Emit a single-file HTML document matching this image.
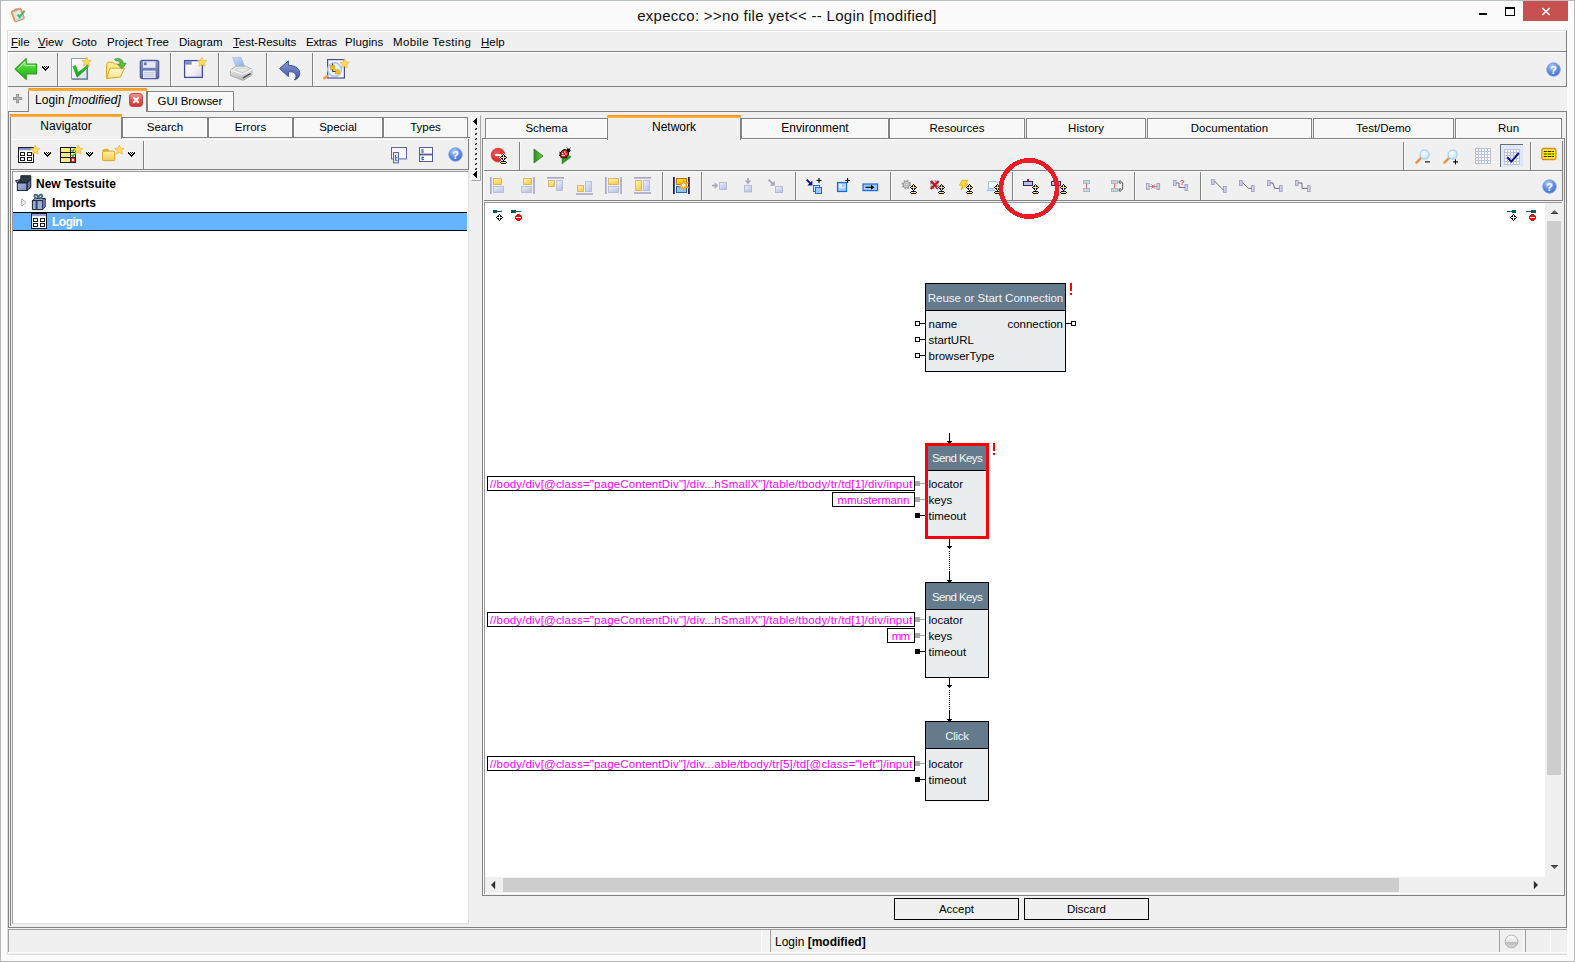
<!DOCTYPE html>
<html><head><meta charset="utf-8"><title>expecco</title>
<style>
html,body{margin:0;padding:0;}
body{width:1575px;height:962px;overflow:hidden;position:relative;background:#fbfbfb;font-family:"Liberation Sans",sans-serif;color:#000;}
body div,body svg{position:absolute;}
u{text-decoration:underline;}
</style></head><body>
<svg style="left:0;top:0" width="0" height="0"><defs><linearGradient id="gY" x1="0" y1="0" x2="0.4" y2="1"><stop offset="0" stop-color="#fff6b8"/><stop offset="1" stop-color="#f8d04a"/></linearGradient><linearGradient id="gB" x1="0" y1="0" x2="0.6" y2="1"><stop offset="0" stop-color="#eef1fa"/><stop offset="1" stop-color="#bcc6e4"/></linearGradient></defs></svg>
<div style="left:0px;top:0px;width:1575px;height:962px;background:#fbfbfb;"></div>
<div style="left:0px;top:0px;width:1575px;height:962px;box-sizing:border-box;border:1px solid #b6b6b6;border-top-color:#b9bebe;"></div>
<div style="left:0px;top:5.5px;line-height:20px;font-size:15px;white-space:nowrap;width:1574px;text-align:center;letter-spacing:0.27px;color:#111;">expecco: &gt;&gt;no file yet&lt;&lt; -- Login [modified]</div>
<svg style="left:9px;top:6px" width="19" height="18" viewBox="0 0 19 18" ><g transform="rotate(-20 8.5 9)">
<rect x="3.6" y="3.4" width="10.4" height="11.4" rx="1.2" fill="#e6a452" stroke="#c98a3c" stroke-width="0.8"/>
<rect x="5" y="4.8" width="7.6" height="8.8" fill="#dde7f7"/>
<path d="M5 13.6 H12.6 V9" fill="none" stroke="#bcd0ee" stroke-width="1.4"/>
<ellipse cx="8.8" cy="3.6" rx="2.3" ry="1.3" fill="#d98c8c"/></g>
<path d="M8.6 8.6 L10.6 11 L15.6 4.6" fill="none" stroke="#56ba4a" stroke-width="2.1"/></svg>
<div style="left:1523px;top:1px;width:45px;height:20px;background:#c75050;"></div>
<div style="left:1479px;top:13px;width:8px;height:2px;background:#000;"></div>
<div style="left:1505px;top:7px;width:10px;height:9px;box-sizing:border-box;border:1px solid #000;border-top-width:2px;"></div>
<svg style="left:1541px;top:7px" width="10" height="9" viewBox="0 0 10 9" ><path d="M1.2 1 L8.8 8 M8.8 1 L1.2 8" stroke="#fff" stroke-width="1.6" fill="none"/></svg>
<div style="left:8px;top:31px;width:1559px;height:923px;background:#f0f0f0;"></div>
<div style="left:7px;top:30px;width:1561px;height:1px;background:#dedede"></div>
<div style="left:7px;top:30px;width:1px;height:925px;background:#dedede"></div>
<div style="left:8px;top:31px;width:1559px;height:1px;background:#ffffff"></div>
<div style="left:8px;top:31px;width:1px;height:923px;background:#ffffff"></div>
<div style="left:8px;top:51px;width:1559px;height:1px;background:#828282"></div>
<div style="left:1566px;top:31px;width:1px;height:21px;background:#828282"></div>
<div style="left:11px;top:33.5px;line-height:16px;font-size:11.5px;white-space:nowrap;"><u>F</u>ile</div>
<div style="left:38px;top:33.5px;line-height:16px;font-size:11.5px;white-space:nowrap;"><u>V</u>iew</div>
<div style="left:72px;top:33.5px;line-height:16px;font-size:11.5px;white-space:nowrap;">Goto</div>
<div style="left:107px;top:33.5px;line-height:16px;font-size:11.5px;white-space:nowrap;">Project Tree</div>
<div style="left:179px;top:33.5px;line-height:16px;font-size:11.5px;white-space:nowrap;">Diagram</div>
<div style="left:233px;top:33.5px;line-height:16px;font-size:11.5px;white-space:nowrap;"><u>T</u>est-Results</div>
<div style="left:306px;top:33.5px;line-height:16px;font-size:11.5px;white-space:nowrap;letter-spacing:-0.3px;">Extras</div>
<div style="left:345px;top:33.5px;line-height:16px;font-size:11.5px;white-space:nowrap;letter-spacing:0.1px;">Plugins</div>
<div style="left:393px;top:33.5px;line-height:16px;font-size:11.5px;white-space:nowrap;letter-spacing:0.35px;">Mobile Testing</div>
<div style="left:481px;top:33.5px;line-height:16px;font-size:11.5px;white-space:nowrap;"><u>H</u>elp</div>
<div style="left:8px;top:52px;width:1559px;height:1px;background:#fdfdfd"></div>
<div style="left:8px;top:52px;width:1px;height:35px;background:#fdfdfd"></div>
<div style="left:8px;top:86px;width:1559px;height:1px;background:#828282"></div>
<div style="left:1566px;top:52px;width:1px;height:35px;background:#828282"></div>
<div style="left:57px;top:53px;width:1px;height:33px;background:#828282"></div>
<div style="left:58px;top:53px;width:1px;height:33px;background:#fafafa"></div>
<div style="left:170px;top:53px;width:1px;height:33px;background:#828282"></div>
<div style="left:171px;top:53px;width:1px;height:33px;background:#fafafa"></div>
<div style="left:218px;top:53px;width:1px;height:33px;background:#828282"></div>
<div style="left:219px;top:53px;width:1px;height:33px;background:#fafafa"></div>
<div style="left:266px;top:53px;width:1px;height:33px;background:#828282"></div>
<div style="left:267px;top:53px;width:1px;height:33px;background:#fafafa"></div>
<div style="left:312px;top:53px;width:1px;height:33px;background:#828282"></div>
<div style="left:313px;top:53px;width:1px;height:33px;background:#fafafa"></div>
<svg style="left:14px;top:57px" width="24" height="24" viewBox="0 0 24 24" ><defs><linearGradient id="ga" x1="0" y1="0" x2="0" y2="1"><stop offset="0" stop-color="#9af07a"/><stop offset="0.5" stop-color="#3fcf2b"/><stop offset="1" stop-color="#28a61b"/></linearGradient></defs>
<path d="M1.2 12 L12.2 1.6 V7.2 H22.6 V16.8 H12.2 V22.4 Z" fill="url(#ga)" stroke="#2f9e22" stroke-width="1.2" stroke-linejoin="round"/>
<path d="M3.6 12 L11 5 V8.4 H21.2" fill="none" stroke="#c8f8b4" stroke-width="1" opacity="0.8"/></svg>
<svg style="left:42px;top:65px" width="7" height="7" viewBox="0 0 7 7" shape-rendering="crispEdges"><rect x="0" y="0" width="1" height="1" fill="#fafafa"/><rect x="2" y="0" width="1" height="1" fill="#fafafa"/><rect x="4" y="0" width="1" height="1" fill="#fafafa"/><rect x="6" y="0" width="1" height="1" fill="#fafafa"/><rect x="0" y="1" width="1" height="1" fill="#000"/><rect x="2" y="1" width="1" height="1" fill="#000"/><rect x="4" y="1" width="1" height="1" fill="#000"/><rect x="6" y="1" width="1" height="1" fill="#000"/><rect x="0" y="2" width="2" height="1" fill="#000"/><rect x="2" y="2" width="1" height="1" fill="#fafafa"/><rect x="3" y="2" width="1" height="1" fill="#000"/><rect x="4" y="2" width="1" height="1" fill="#fafafa"/><rect x="5" y="2" width="2" height="1" fill="#000"/><rect x="0" y="3" width="1" height="1" fill="#fafafa"/><rect x="1" y="3" width="2" height="1" fill="#000"/><rect x="3" y="3" width="1" height="1" fill="#fafafa"/><rect x="4" y="3" width="2" height="1" fill="#000"/><rect x="6" y="3" width="1" height="1" fill="#fafafa"/><rect x="1" y="4" width="1" height="1" fill="#fafafa"/><rect x="2" y="4" width="3" height="1" fill="#000"/><rect x="5" y="4" width="1" height="1" fill="#fafafa"/><rect x="2" y="5" width="1" height="1" fill="#fafafa"/><rect x="3" y="5" width="1" height="1" fill="#000"/><rect x="4" y="5" width="1" height="1" fill="#fafafa"/><rect x="3" y="6" width="1" height="1" fill="#fafafa"/></svg>
<svg style="left:70px;top:56px" width="23" height="25" viewBox="0 0 23 25" ><defs><linearGradient id="pg" x1="0" y1="0" x2="1" y2="1"><stop offset="0" stop-color="#ffffff"/><stop offset="0.5" stop-color="#f4f0f6"/><stop offset="1" stop-color="#d9dcea"/></linearGradient>
<linearGradient id="ck" x1="0" y1="0" x2="0" y2="1"><stop offset="0" stop-color="#2fd02f"/><stop offset="1" stop-color="#0e9a12"/></linearGradient></defs>
<rect x="1.5" y="2.5" width="15.5" height="20.5" fill="url(#pg)" stroke="#8aa0b4" stroke-width="1"/>
<path d="M1.8 23.2 H17.4 V3.4" stroke="#5f7f96" stroke-width="1.3" fill="none"/>
<path d="M2.9 10.6 L5.6 9.7 L8 16.6 L17.4 9.5 L18.4 10.8 L7.2 21.2 Z" fill="url(#ck)" stroke="#11a016" stroke-width="0.7" stroke-linejoin="round"/><g transform="translate(11.8,0.9) scale(0.95)"><path d="M5 0 L6.4 3.3 L10 3.7 L7.3 6.1 L8.1 9.6 L5 7.8 L1.9 9.6 L2.7 6.1 L0 3.7 L3.6 3.3 Z" fill="#fbdc66" stroke="#e8b030" stroke-width="0.7"/></g></svg>
<svg style="left:105px;top:56px" width="23" height="25" viewBox="0 0 23 25" ><defs><linearGradient id="fo" x1="0" y1="0" x2="0" y2="1"><stop offset="0" stop-color="#fffad2"/><stop offset="1" stop-color="#fbe384"/></linearGradient></defs>
<path d="M1.5 22.5 V8 L3 6.2 H8 L9.4 8 H16.5 V12" fill="#fdea8c" stroke="#dfa62a" stroke-width="1"/>
<path d="M1.5 22.5 L5 12.2 H19.5 L15.5 21 Z" fill="url(#fo)" stroke="#d9a62a" stroke-width="1" stroke-linejoin="round"/>
<path d="M9.5 3.2 C14 1.4 18 3.4 18.4 7.6 L21.2 7.2 L17.2 12.6 L12.6 8.6 L15.4 8.2 C15 5.6 13 4.4 10.4 4.6 Z" fill="#5dbb45" stroke="#3b9a2b" stroke-width="0.8" stroke-linejoin="round"/></svg>
<svg style="left:139px;top:59px" width="21" height="21" viewBox="0 0 21 21" ><defs><linearGradient id="sv" x1="0" y1="0" x2="0" y2="1"><stop offset="0" stop-color="#8593c8"/><stop offset="1" stop-color="#5966a8"/></linearGradient></defs>
<rect x="1.3" y="1.3" width="18.4" height="18.4" rx="2" fill="url(#sv)" stroke="#4f5b9e" stroke-width="1.2"/>
<rect x="4" y="2.4" width="12.6" height="6.4" fill="#e4e8f6"/>
<rect x="5" y="3.4" width="2.6" height="2.8" fill="#6572b4"/>
<rect x="4" y="11.6" width="12.6" height="7.4" fill="#e9ecf8"/>
<path d="M5 13.6 H15.6 M5 15.6 H15.6 M5 17.4 H15.6" stroke="#b9c1de" stroke-width="0.9"/></svg>
<svg style="left:183px;top:56px" width="25" height="24" viewBox="0 0 25 24" ><defs><linearGradient id="nw" x1="0" y1="0" x2="1" y2="1"><stop offset="0" stop-color="#ffffff"/><stop offset="0.6" stop-color="#f5f0f4"/><stop offset="1" stop-color="#cfcde6"/></linearGradient></defs>
<rect x="1.6" y="4.6" width="17.8" height="16.8" fill="url(#nw)" stroke="#3f4f9e" stroke-width="1.3"/>
<rect x="2.2" y="5.2" width="6.4" height="3.4" fill="#7f8cc4"/><g transform="translate(14.2,1.2) scale(0.95)"><path d="M5 0 L6.4 3.3 L10 3.7 L7.3 6.1 L8.1 9.6 L5 7.8 L1.9 9.6 L2.7 6.1 L0 3.7 L3.6 3.3 Z" fill="#fbdc66" stroke="#e8b030" stroke-width="0.7"/></g></svg>
<svg style="left:229px;top:56px" width="25" height="26" viewBox="0 0 25 26" ><defs><linearGradient id="pp" x1="0" y1="0" x2="1" y2="1"><stop offset="0" stop-color="#c9dcf7"/><stop offset="1" stop-color="#8fb0e6"/></linearGradient>
<linearGradient id="pb" x1="0" y1="0" x2="0" y2="1"><stop offset="0" stop-color="#f4f4f4"/><stop offset="1" stop-color="#b9b9b9"/></linearGradient></defs>
<path d="M3.6 1.4 H12 L15.6 10.6 H7 Z" fill="url(#pp)" stroke="#9fb9e6" stroke-width="0.7"/>
<path d="M1.4 14 L7.2 10.2 H16.6 L23 13.4 V19 L14 24.4 L1.4 19.6 Z" fill="url(#pb)" stroke="#a2a2a2" stroke-width="0.8" stroke-linejoin="round"/>
<path d="M1.4 14 L13.6 18.2 L23 13.4" fill="none" stroke="#fdfdfd" stroke-width="1"/>
<path d="M8.4 12.2 H16 L19.6 13.8 L13.4 16.4 L6.2 13.8 Z" fill="#ececec" stroke="#bdbdbd" stroke-width="0.6"/>
<path d="M13.8 21.2 L21.6 16.8 V18.4 L13.8 22.8 Z" fill="#4a4a4a"/></svg>
<svg style="left:278px;top:58.5px" width="24" height="23" viewBox="0 0 24 23" ><defs><linearGradient id="un" x1="0" y1="0" x2="0" y2="1"><stop offset="0" stop-color="#8a9bd2"/><stop offset="1" stop-color="#3f55a6"/></linearGradient></defs>
<path d="M1.6 9.6 L10.4 1.8 V6.4 C17.6 6.2 22.6 10.2 21.6 15.4 C21 18.4 19 20.2 16.6 21 C18.4 18.6 18.6 16.2 17 14.4 C15.4 12.8 13 12.6 10.4 12.8 V17.6 Z" fill="url(#un)" stroke="#3a4d98" stroke-width="1" stroke-linejoin="round"/></svg>
<svg style="left:322px;top:56px" width="28" height="25" viewBox="0 0 28 25" ><rect x="5.6" y="3.6" width="16.8" height="18.4" fill="#fbf7fb" stroke="#3f4f9e" stroke-width="1.2"/>
<circle cx="12.6" cy="13.6" r="6.9" fill="#daf3fc" stroke="#b4bfea" stroke-width="1.5" opacity="0.96"/>
<rect x="8.4" y="9.4" width="4.4" height="4.2" fill="#f6b912" stroke="#d79a0a" stroke-width="0.5"/>
<rect x="13.4" y="13.8" width="4.2" height="4.2" fill="#f6b912" stroke="#d79a0a" stroke-width="0.5"/>
<path d="M10.6 7.6 V9.4 M10.6 13.6 V15.4 H13.4" stroke="#222" stroke-width="1" fill="none"/>
<path d="M5.4 20 L2.4 22.2" stroke="#ee9a4a" stroke-width="2.6" stroke-linecap="round"/><g transform="translate(17.8,2.8) scale(0.95)"><path d="M5 0 L6.4 3.3 L10 3.7 L7.3 6.1 L8.1 9.6 L5 7.8 L1.9 9.6 L2.7 6.1 L0 3.7 L3.6 3.3 Z" fill="#fbdc66" stroke="#e8b030" stroke-width="0.7"/></g></svg>
<svg style="left:1546px;top:61.5px" width="15" height="15" viewBox="0 0 16 16" ><defs><radialGradient id="hg154661.5" cx="0.42" cy="0.3" r="0.8"><stop offset="0" stop-color="#b9d0f7"/><stop offset="0.55" stop-color="#5c8ae4"/><stop offset="1" stop-color="#3866cc"/></radialGradient></defs>
<circle cx="8" cy="8" r="7.2" fill="url(#hg154661.5)" stroke="#7d9de0" stroke-width="0.9"/>
<text x="8" y="12.4" font-family="Liberation Sans" font-weight="bold" font-size="12" text-anchor="middle" fill="#fff">?</text></svg>
<div style="left:8px;top:111px;width:1559px;height:1px;background:#828282"></div>
<svg style="left:13px;top:94px" width="10" height="10" viewBox="0 0 10 10" ><path d="M4.6 0 V9.2 M0 4.6 H9.2" stroke="#8e8e8e" stroke-width="3" fill="none"/><path d="M4.6 0.7 V8.5 M0.7 4.6 H8.5" stroke="#b4b4b4" stroke-width="1.5" fill="none"/></svg>
<div style="left:28px;top:88px;width:119px;height:24px;background:#f0f0f0;box-sizing:border-box;border:1px solid #828282;border-bottom:none;border-radius:2px 2px 0 0;"></div>
<div style="left:28px;top:88px;width:119px;height:3px;background:linear-gradient(#ff9416,#ffb545);border-radius:2px 2px 0 0;"></div>
<div style="left:35px;top:92.0px;line-height:16px;font-size:12px;white-space:nowrap;letter-spacing:0.08px;">Login <i>[modified]</i></div>
<svg style="left:129px;top:93px" width="14" height="14" viewBox="0 0 14 14" ><defs><linearGradient id="cr" x1="0" y1="0" x2="0" y2="1"><stop offset="0" stop-color="#f29a9a"/><stop offset="0.45" stop-color="#e25a5a"/><stop offset="1" stop-color="#cf3434"/></linearGradient></defs>
<rect x="0.5" y="0.5" width="13" height="13" rx="3" fill="url(#cr)" stroke="#c04848"/>
<path d="M4.3 4.3 L9.7 9.7 M9.7 4.3 L4.3 9.7" stroke="#fff" stroke-width="2" fill="none"/></svg>
<div style="left:147px;top:91px;width:87px;height:20px;background:#f8f8f8;box-sizing:border-box;border:1px solid #828282;border-bottom:none;border-radius:0 2px 0 0;box-shadow:inset 1px 1px 0 #fff,inset -1px 0 0 #fff;"></div>
<div style="left:157.6px;top:93.0px;line-height:16px;font-size:11.5px;white-space:nowrap;letter-spacing:-0.12px;">GUI Browser</div>
<div style="left:8px;top:112px;width:1px;height:816px;background:#828282"></div>
<div style="left:1566px;top:112px;width:1px;height:816px;background:#828282"></div>
<div style="left:8px;top:927px;width:1559px;height:1px;background:#828282"></div>
<div style="left:10px;top:114px;width:1px;height:812px;background:#828282"></div>
<div style="left:122px;top:117px;width:86px;height:20px;background:#f8f8f8;box-sizing:border-box;border:1px solid #828282;border-bottom:none;box-shadow:inset 1px 1px 0 #fff,inset -1px 0 0 #fff;"></div>
<div style="left:122px;top:118.5px;line-height:16px;font-size:11.5px;white-space:nowrap;width:86px;text-align:center;">Search</div>
<div style="left:208px;top:117px;width:85px;height:20px;background:#f8f8f8;box-sizing:border-box;border:1px solid #828282;border-bottom:none;box-shadow:inset 1px 1px 0 #fff,inset -1px 0 0 #fff;"></div>
<div style="left:208px;top:118.5px;line-height:16px;font-size:11.5px;white-space:nowrap;width:85px;text-align:center;">Errors</div>
<div style="left:293px;top:117px;width:90px;height:20px;background:#f8f8f8;box-sizing:border-box;border:1px solid #828282;border-bottom:none;box-shadow:inset 1px 1px 0 #fff,inset -1px 0 0 #fff;"></div>
<div style="left:293px;top:118.5px;line-height:16px;font-size:11.5px;white-space:nowrap;width:90px;text-align:center;">Special</div>
<div style="left:383px;top:117px;width:85px;height:20px;background:#f8f8f8;box-sizing:border-box;border:1px solid #828282;border-bottom:none;box-shadow:inset 1px 1px 0 #fff,inset -1px 0 0 #fff;"></div>
<div style="left:383px;top:118.5px;line-height:16px;font-size:11.5px;white-space:nowrap;width:85px;text-align:center;">Types</div>
<div style="left:10px;top:137px;width:460px;height:1px;background:#828282"></div>
<div style="left:10px;top:114px;width:112px;height:25px;background:#f0f0f0;box-sizing:border-box;border:1px solid #828282;border-bottom:none;border-radius:2px 2px 0 0;"></div>
<div style="left:10px;top:114px;width:112px;height:3px;background:linear-gradient(#ff9416,#ffb545);border-radius:2px 2px 0 0;"></div>
<div style="left:10px;top:117.8px;line-height:16px;font-size:12px;white-space:nowrap;width:112px;text-align:center;">Navigator</div>
<div style="left:11px;top:139px;width:458px;height:1px;background:#fbfbfb"></div>
<div style="left:11px;top:169px;width:458px;height:1px;background:#828282"></div>
<div style="left:468px;top:139px;width:1px;height:31px;background:#828282"></div>
<div style="left:143px;top:141px;width:1px;height:28px;background:#828282"></div>
<div style="left:144px;top:141px;width:1px;height:28px;background:#fafafa"></div>
<svg style="left:18px;top:145px" width="24" height="19" viewBox="0 0 24 19" ><g transform="translate(0,2)"><rect x="0.5" y="0.5" width="15" height="15" fill="#fff" stroke="#1a1a1a"/>
<rect x="1" y="1" width="14" height="2.2" fill="#8392c8"/>
<rect x="2.5" y="5.5" width="4" height="3" fill="#fff" stroke="#1a1a1a"/><rect x="9.5" y="5.5" width="4" height="3" fill="#fff" stroke="#1a1a1a"/>
<rect x="2.5" y="10.5" width="4" height="3" fill="#fff" stroke="#1a1a1a"/><rect x="9.5" y="10.5" width="4" height="3" fill="#fff" stroke="#1a1a1a"/></g><g transform="translate(12.4,0) scale(0.95)"><path d="M5 0 L6.4 3.3 L10 3.7 L7.3 6.1 L8.1 9.6 L5 7.8 L1.9 9.6 L2.7 6.1 L0 3.7 L3.6 3.3 Z" fill="#fbdc66" stroke="#e8b030" stroke-width="0.7"/></g></svg>
<svg style="left:44px;top:151px" width="7" height="7" viewBox="0 0 7 7" shape-rendering="crispEdges"><rect x="0" y="0" width="1" height="1" fill="#fafafa"/><rect x="2" y="0" width="1" height="1" fill="#fafafa"/><rect x="4" y="0" width="1" height="1" fill="#fafafa"/><rect x="6" y="0" width="1" height="1" fill="#fafafa"/><rect x="0" y="1" width="1" height="1" fill="#000"/><rect x="2" y="1" width="1" height="1" fill="#000"/><rect x="4" y="1" width="1" height="1" fill="#000"/><rect x="6" y="1" width="1" height="1" fill="#000"/><rect x="0" y="2" width="2" height="1" fill="#000"/><rect x="2" y="2" width="1" height="1" fill="#fafafa"/><rect x="3" y="2" width="1" height="1" fill="#000"/><rect x="4" y="2" width="1" height="1" fill="#fafafa"/><rect x="5" y="2" width="2" height="1" fill="#000"/><rect x="0" y="3" width="1" height="1" fill="#fafafa"/><rect x="1" y="3" width="2" height="1" fill="#000"/><rect x="3" y="3" width="1" height="1" fill="#fafafa"/><rect x="4" y="3" width="2" height="1" fill="#000"/><rect x="6" y="3" width="1" height="1" fill="#fafafa"/><rect x="1" y="4" width="1" height="1" fill="#fafafa"/><rect x="2" y="4" width="3" height="1" fill="#000"/><rect x="5" y="4" width="1" height="1" fill="#fafafa"/><rect x="2" y="5" width="1" height="1" fill="#fafafa"/><rect x="3" y="5" width="1" height="1" fill="#000"/><rect x="4" y="5" width="1" height="1" fill="#fafafa"/><rect x="3" y="6" width="1" height="1" fill="#fafafa"/></svg>
<svg style="left:60px;top:145px" width="24" height="19" viewBox="0 0 24 19" ><rect x="0.5" y="2.5" width="15" height="15" fill="#f7ee8a" stroke="#1a1a1a"/>
<path d="M0.5 7.5 H15.5 M0.5 12.5 H15.5 M10.5 2.5 V17.5" stroke="#1a1a1a" fill="none"/>
<path d="M11.6 5.2 L12.8 6.4 L14.6 3.8" stroke="#1c9c2c" stroke-width="1.2" fill="none"/>
<path d="M11.6 10.2 L12.8 11.4 L14.6 8.8" stroke="#1c9c2c" stroke-width="1.2" fill="none"/>
<circle cx="13" cy="15" r="1.8" fill="#fff" stroke="#e01818" stroke-width="1.3"/><g transform="translate(13.4,0) scale(0.95)"><path d="M5 0 L6.4 3.3 L10 3.7 L7.3 6.1 L8.1 9.6 L5 7.8 L1.9 9.6 L2.7 6.1 L0 3.7 L3.6 3.3 Z" fill="#fbdc66" stroke="#e8b030" stroke-width="0.7"/></g></svg>
<svg style="left:86px;top:151px" width="7" height="7" viewBox="0 0 7 7" shape-rendering="crispEdges"><rect x="0" y="0" width="1" height="1" fill="#fafafa"/><rect x="2" y="0" width="1" height="1" fill="#fafafa"/><rect x="4" y="0" width="1" height="1" fill="#fafafa"/><rect x="6" y="0" width="1" height="1" fill="#fafafa"/><rect x="0" y="1" width="1" height="1" fill="#000"/><rect x="2" y="1" width="1" height="1" fill="#000"/><rect x="4" y="1" width="1" height="1" fill="#000"/><rect x="6" y="1" width="1" height="1" fill="#000"/><rect x="0" y="2" width="2" height="1" fill="#000"/><rect x="2" y="2" width="1" height="1" fill="#fafafa"/><rect x="3" y="2" width="1" height="1" fill="#000"/><rect x="4" y="2" width="1" height="1" fill="#fafafa"/><rect x="5" y="2" width="2" height="1" fill="#000"/><rect x="0" y="3" width="1" height="1" fill="#fafafa"/><rect x="1" y="3" width="2" height="1" fill="#000"/><rect x="3" y="3" width="1" height="1" fill="#fafafa"/><rect x="4" y="3" width="2" height="1" fill="#000"/><rect x="6" y="3" width="1" height="1" fill="#fafafa"/><rect x="1" y="4" width="1" height="1" fill="#fafafa"/><rect x="2" y="4" width="3" height="1" fill="#000"/><rect x="5" y="4" width="1" height="1" fill="#fafafa"/><rect x="2" y="5" width="1" height="1" fill="#fafafa"/><rect x="3" y="5" width="1" height="1" fill="#000"/><rect x="4" y="5" width="1" height="1" fill="#fafafa"/><rect x="3" y="6" width="1" height="1" fill="#fafafa"/></svg>
<svg style="left:101px;top:145px" width="25" height="19" viewBox="0 0 25 19" ><defs><linearGradient id="fl" x1="0" y1="0" x2="0" y2="1"><stop offset="0" stop-color="#fff3a8"/><stop offset="1" stop-color="#f3cb55"/></linearGradient></defs>
<path d="M1.5 6 L2.8 4.4 H7 L8.2 6 Z" fill="#f1c84a" stroke="#d9a62a"/>
<rect x="1.5" y="6.2" width="12.2" height="9.4" rx="0.8" fill="url(#fl)" stroke="#d9a62a"/><g transform="translate(13.6,0) scale(0.95)"><path d="M5 0 L6.4 3.3 L10 3.7 L7.3 6.1 L8.1 9.6 L5 7.8 L1.9 9.6 L2.7 6.1 L0 3.7 L3.6 3.3 Z" fill="#fbdc66" stroke="#e8b030" stroke-width="0.7"/></g></svg>
<svg style="left:128px;top:151px" width="7" height="7" viewBox="0 0 7 7" shape-rendering="crispEdges"><rect x="0" y="0" width="1" height="1" fill="#fafafa"/><rect x="2" y="0" width="1" height="1" fill="#fafafa"/><rect x="4" y="0" width="1" height="1" fill="#fafafa"/><rect x="6" y="0" width="1" height="1" fill="#fafafa"/><rect x="0" y="1" width="1" height="1" fill="#000"/><rect x="2" y="1" width="1" height="1" fill="#000"/><rect x="4" y="1" width="1" height="1" fill="#000"/><rect x="6" y="1" width="1" height="1" fill="#000"/><rect x="0" y="2" width="2" height="1" fill="#000"/><rect x="2" y="2" width="1" height="1" fill="#fafafa"/><rect x="3" y="2" width="1" height="1" fill="#000"/><rect x="4" y="2" width="1" height="1" fill="#fafafa"/><rect x="5" y="2" width="2" height="1" fill="#000"/><rect x="0" y="3" width="1" height="1" fill="#fafafa"/><rect x="1" y="3" width="2" height="1" fill="#000"/><rect x="3" y="3" width="1" height="1" fill="#fafafa"/><rect x="4" y="3" width="2" height="1" fill="#000"/><rect x="6" y="3" width="1" height="1" fill="#fafafa"/><rect x="1" y="4" width="1" height="1" fill="#fafafa"/><rect x="2" y="4" width="3" height="1" fill="#000"/><rect x="5" y="4" width="1" height="1" fill="#fafafa"/><rect x="2" y="5" width="1" height="1" fill="#fafafa"/><rect x="3" y="5" width="1" height="1" fill="#000"/><rect x="4" y="5" width="1" height="1" fill="#fafafa"/><rect x="3" y="6" width="1" height="1" fill="#fafafa"/></svg>
<svg style="left:391px;top:147px" width="17" height="18" viewBox="0 0 17 18" ><rect x="0.5" y="0.5" width="15" height="11.4" fill="#f6f6fb" stroke="#5b66a8"/>
<rect x="2.5" y="5.5" width="5" height="10.4" fill="#dfe3f4" stroke="#5b66a8"/>
<path d="M4.6 8 V13.6 M4.6 10.6 H6.4 M4.6 13.4 H6.4" stroke="#2a7ac8" stroke-width="1" fill="none"/></svg>
<svg style="left:419px;top:147px" width="15" height="16" viewBox="0 0 15 16" ><rect x="0.5" y="0.5" width="13" height="14" fill="#fbfbfe" stroke="#5b5a9a"/>
<rect x="0.5" y="6.6" width="13" height="1.8" fill="#5b5a9a"/>
<path d="M3 2 V6 M3 3 H5 M3 5 H5 M3 9.4 V13.4 M3 10.4 H5 M3 12.4 H5" stroke="#2a7ac8" stroke-width="1.1" fill="none"/></svg>
<svg style="left:447.5px;top:147px" width="15" height="15" viewBox="0 0 16 16" ><defs><radialGradient id="hg447.5147" cx="0.42" cy="0.3" r="0.8"><stop offset="0" stop-color="#b9d0f7"/><stop offset="0.55" stop-color="#5c8ae4"/><stop offset="1" stop-color="#3866cc"/></radialGradient></defs>
<circle cx="8" cy="8" r="7.2" fill="url(#hg447.5147)" stroke="#7d9de0" stroke-width="0.9"/>
<text x="8" y="12.4" font-family="Liberation Sans" font-weight="bold" font-size="12" text-anchor="middle" fill="#fff">?</text></svg>
<div style="left:12px;top:171px;width:457px;height:753px;background:#fff;box-sizing:border-box;border:1px solid #9a9a9a;border-right-color:#e0e0e0;border-bottom-color:#e0e0e0;"></div>
<svg style="left:15px;top:174px" width="17" height="18" viewBox="0 0 17 18" ><defs><linearGradient id="bx" x1="0" y1="0" x2="1" y2="1"><stop offset="0" stop-color="#aab6dc"/><stop offset="1" stop-color="#7e8cc0"/></linearGradient></defs>
<path d="M5.8 1.7 H15.8 V5.6 L11.9 9 H2.3 L5.8 5.6 Z" fill="#2c3c44" stroke="#101820" stroke-width="0.9" stroke-linejoin="round"/>
<path d="M5.8 5.6 L0.5 6.6 L2.3 9 Z" fill="#9aa8d4" stroke="#101820" stroke-width="0.9" stroke-linejoin="round"/>
<path d="M11.9 9 L15.8 5.6 V13.2 L11.9 16.6 Z" fill="#6572a6" stroke="#101820" stroke-width="0.9" stroke-linejoin="round"/>
<rect x="2.3" y="9" width="9.6" height="7.6" fill="url(#bx)" stroke="#101820" stroke-width="0.9"/></svg>
<svg style="left:21px;top:198px" width="6" height="9" viewBox="0 0 6 9" ><path d="M0.7 0.9 L5 4.5 L0.7 8.1 Z" fill="#fff" stroke="#a6a6a6" stroke-width="1"/></svg>
<svg style="left:31px;top:193px" width="16" height="18" viewBox="0 0 16 18" ><path d="M1.4 7.6 L4 5.4 H14.2 V13.8 L11.6 16.6 H1.4 Z" fill="#9fb0d6" stroke="#15202a" stroke-width="1" stroke-linejoin="round"/>
<path d="M11.6 7.6 V16.6 M1.4 7.6 H11.6 L14.2 5.4" stroke="#15202a" stroke-width="1" fill="none"/>
<path d="M11.8 7.8 L14 5.8 V13.6 L11.8 16.2 Z" fill="#6a7aa8"/>
<path d="M5.6 7.6 V16.6" stroke="#2f4a60" stroke-width="2"/>
<path d="M6 5.6 C3 4.8 2.6 1.6 5 1.6 C6.6 1.6 7 3.6 7.2 5.4 C7.6 3.4 8.4 1.4 10.2 1.6 C12.4 2 11.4 5 8.4 5.6" fill="none" stroke="#3f627c" stroke-width="1.7"/></svg>
<div style="left:36px;top:175.5px;line-height:16px;font-size:12px;white-space:nowrap;font-weight:bold;">New Testsuite</div>
<div style="left:52px;top:194.5px;line-height:16px;font-size:12px;white-space:nowrap;font-weight:bold;">Imports</div>
<div style="left:13px;top:212px;width:454px;height:19px;background:#66b3ff;box-sizing:border-box;border-top:1px solid #000;border-bottom:1px solid #000;"></div>
<div style="left:52px;top:213.5px;line-height:16px;font-size:12px;white-space:nowrap;letter-spacing:-0.5px;font-weight:bold;color:#fff;">Login</div>
<svg style="left:31px;top:213px" width="17" height="17" viewBox="0 0 17 17" ><g transform="translate(0,0)"><rect x="0.5" y="0.5" width="15" height="15" fill="#fff" stroke="#1a1a1a"/>
<rect x="1" y="1" width="14" height="2.2" fill="#8fa0dc"/>
<rect x="2.5" y="5.5" width="4" height="3" fill="#fff" stroke="#1a1a1a"/><rect x="9.5" y="5.5" width="4" height="3" fill="#fff" stroke="#1a1a1a"/>
<rect x="2.5" y="10.5" width="4" height="3" fill="#fff" stroke="#1a1a1a"/><rect x="9.5" y="10.5" width="4" height="3" fill="#fff" stroke="#1a1a1a"/></g></svg>
<div style="left:471px;top:115px;width:10px;height:66px;background:#f0f0f0;box-sizing:border-box;border:1px solid #a6a6a6;border-top-color:#fcfcfc;border-left-color:#fcfcfc;"></div>
<svg style="left:473px;top:118px" width="4" height="7" viewBox="0 0 4 7" shape-rendering="crispEdges"><rect x="3" y="0" width="1" height="1" fill="#000"/><rect x="2" y="1" width="2" height="1" fill="#000"/><rect x="1" y="2" width="3" height="1" fill="#000"/><rect x="0" y="3" width="4" height="1" fill="#000"/><rect x="1" y="4" width="3" height="1" fill="#000"/><rect x="2" y="5" width="2" height="1" fill="#000"/><rect x="3" y="6" width="1" height="1" fill="#000"/></svg>
<svg style="left:473px;top:171px" width="4" height="7" viewBox="0 0 4 7" shape-rendering="crispEdges"><rect x="3" y="0" width="1" height="1" fill="#000"/><rect x="2" y="1" width="2" height="1" fill="#000"/><rect x="1" y="2" width="3" height="1" fill="#000"/><rect x="0" y="3" width="4" height="1" fill="#000"/><rect x="1" y="4" width="3" height="1" fill="#000"/><rect x="2" y="5" width="2" height="1" fill="#000"/><rect x="3" y="6" width="1" height="1" fill="#000"/></svg>
<svg style="left:475px;top:128px" width="2" height="2" viewBox="0 0 2 2" shape-rendering="crispEdges"><rect x="0" y="0" width="1" height="1" fill="#8a8a8a"/><rect x="1" y="0" width="1" height="1" fill="#111"/><rect x="0" y="1" width="1" height="1" fill="#111"/><rect x="1" y="1" width="1" height="1" fill="#8a8a8a"/></svg>
<svg style="left:475px;top:133px" width="2" height="2" viewBox="0 0 2 2" shape-rendering="crispEdges"><rect x="0" y="0" width="1" height="1" fill="#8a8a8a"/><rect x="1" y="0" width="1" height="1" fill="#111"/><rect x="0" y="1" width="1" height="1" fill="#111"/><rect x="1" y="1" width="1" height="1" fill="#8a8a8a"/></svg>
<svg style="left:475px;top:138px" width="2" height="2" viewBox="0 0 2 2" shape-rendering="crispEdges"><rect x="0" y="0" width="1" height="1" fill="#8a8a8a"/><rect x="1" y="0" width="1" height="1" fill="#111"/><rect x="0" y="1" width="1" height="1" fill="#111"/><rect x="1" y="1" width="1" height="1" fill="#8a8a8a"/></svg>
<svg style="left:475px;top:143px" width="2" height="2" viewBox="0 0 2 2" shape-rendering="crispEdges"><rect x="0" y="0" width="1" height="1" fill="#8a8a8a"/><rect x="1" y="0" width="1" height="1" fill="#111"/><rect x="0" y="1" width="1" height="1" fill="#111"/><rect x="1" y="1" width="1" height="1" fill="#8a8a8a"/></svg>
<svg style="left:475px;top:148px" width="2" height="2" viewBox="0 0 2 2" shape-rendering="crispEdges"><rect x="0" y="0" width="1" height="1" fill="#8a8a8a"/><rect x="1" y="0" width="1" height="1" fill="#111"/><rect x="0" y="1" width="1" height="1" fill="#111"/><rect x="1" y="1" width="1" height="1" fill="#8a8a8a"/></svg>
<svg style="left:475px;top:153px" width="2" height="2" viewBox="0 0 2 2" shape-rendering="crispEdges"><rect x="0" y="0" width="1" height="1" fill="#8a8a8a"/><rect x="1" y="0" width="1" height="1" fill="#111"/><rect x="0" y="1" width="1" height="1" fill="#111"/><rect x="1" y="1" width="1" height="1" fill="#8a8a8a"/></svg>
<svg style="left:475px;top:158px" width="2" height="2" viewBox="0 0 2 2" shape-rendering="crispEdges"><rect x="0" y="0" width="1" height="1" fill="#8a8a8a"/><rect x="1" y="0" width="1" height="1" fill="#111"/><rect x="0" y="1" width="1" height="1" fill="#111"/><rect x="1" y="1" width="1" height="1" fill="#8a8a8a"/></svg>
<svg style="left:475px;top:163px" width="2" height="2" viewBox="0 0 2 2" shape-rendering="crispEdges"><rect x="0" y="0" width="1" height="1" fill="#8a8a8a"/><rect x="1" y="0" width="1" height="1" fill="#111"/><rect x="0" y="1" width="1" height="1" fill="#111"/><rect x="1" y="1" width="1" height="1" fill="#8a8a8a"/></svg>
<svg style="left:475px;top:168px" width="2" height="2" viewBox="0 0 2 2" shape-rendering="crispEdges"><rect x="0" y="0" width="1" height="1" fill="#8a8a8a"/><rect x="1" y="0" width="1" height="1" fill="#111"/><rect x="0" y="1" width="1" height="1" fill="#111"/><rect x="1" y="1" width="1" height="1" fill="#8a8a8a"/></svg>
<div style="left:485px;top:118px;width:123px;height:21px;background:#f8f8f8;box-sizing:border-box;border:1px solid #828282;border-bottom:none;box-shadow:inset 1px 1px 0 #fff,inset -1px 0 0 #fff;"></div>
<div style="left:485px;top:119.5px;line-height:16px;font-size:11.5px;white-space:nowrap;width:123px;text-align:center;">Schema</div>
<div style="left:741px;top:118px;width:148px;height:21px;background:#f8f8f8;box-sizing:border-box;border:1px solid #828282;border-bottom:none;box-shadow:inset 1px 1px 0 #fff,inset -1px 0 0 #fff;"></div>
<div style="left:741px;top:119.5px;line-height:16px;font-size:12px;white-space:nowrap;width:148px;text-align:center;">Environment</div>
<div style="left:889px;top:118px;width:136px;height:21px;background:#f8f8f8;box-sizing:border-box;border:1px solid #828282;border-bottom:none;box-shadow:inset 1px 1px 0 #fff,inset -1px 0 0 #fff;"></div>
<div style="left:889px;top:119.5px;line-height:16px;font-size:11.5px;white-space:nowrap;width:136px;text-align:center;">Resources</div>
<div style="left:1026px;top:118px;width:120px;height:21px;background:#f8f8f8;box-sizing:border-box;border:1px solid #828282;border-bottom:none;box-shadow:inset 1px 1px 0 #fff,inset -1px 0 0 #fff;"></div>
<div style="left:1026px;top:119.5px;line-height:16px;font-size:11.5px;white-space:nowrap;width:120px;text-align:center;">History</div>
<div style="left:1147px;top:118px;width:165px;height:21px;background:#f8f8f8;box-sizing:border-box;border:1px solid #828282;border-bottom:none;box-shadow:inset 1px 1px 0 #fff,inset -1px 0 0 #fff;"></div>
<div style="left:1147px;top:119.5px;line-height:16px;font-size:11.5px;white-space:nowrap;width:165px;text-align:center;">Documentation</div>
<div style="left:1313px;top:118px;width:141px;height:21px;background:#f8f8f8;box-sizing:border-box;border:1px solid #828282;border-bottom:none;box-shadow:inset 1px 1px 0 #fff,inset -1px 0 0 #fff;"></div>
<div style="left:1313px;top:119.5px;line-height:16px;font-size:11.5px;white-space:nowrap;width:141px;text-align:center;">Test/Demo</div>
<div style="left:1455px;top:118px;width:107px;height:21px;background:#f8f8f8;box-sizing:border-box;border:1px solid #828282;border-bottom:none;box-shadow:inset 1px 1px 0 #fff,inset -1px 0 0 #fff;"></div>
<div style="left:1455px;top:119.5px;line-height:16px;font-size:11.5px;white-space:nowrap;width:107px;text-align:center;">Run</div>
<div style="left:482px;top:138px;width:1083px;height:1px;background:#828282"></div>
<div style="left:482px;top:138px;width:1px;height:758px;background:#828282"></div>
<div style="left:1564px;top:138px;width:1px;height:758px;background:#828282"></div>
<div style="left:482px;top:895px;width:1083px;height:1px;background:#828282"></div>
<div style="left:483px;top:139px;width:1081px;height:1px;background:#fcfcfc"></div>
<div style="left:483px;top:139px;width:1px;height:756px;background:#fcfcfc"></div>
<div style="left:607px;top:115px;width:134px;height:25px;background:#f0f0f0;box-sizing:border-box;border:1px solid #828282;border-bottom:none;border-radius:2px 2px 0 0;"></div>
<div style="left:607px;top:115px;width:134px;height:3px;background:linear-gradient(#ff9416,#ffb545);border-radius:2px 2px 0 0;"></div>
<div style="left:607px;top:119.0px;line-height:16px;font-size:12px;white-space:nowrap;width:134px;text-align:center;">Network</div>
<div style="left:484px;top:170px;width:1079px;height:1px;background:#828282"></div>
<div style="left:484px;top:171px;width:1079px;height:1px;background:#fbfbfb"></div>
<div style="left:484px;top:200px;width:1079px;height:1px;background:#828282"></div>
<div style="left:1562px;top:141px;width:1px;height:60px;background:#828282"></div>
<div style="left:519px;top:142px;width:1px;height:28px;background:#828282"></div>
<div style="left:520px;top:142px;width:1px;height:28px;background:#fafafa"></div>
<div style="left:1403px;top:142px;width:1px;height:28px;background:#828282"></div>
<div style="left:1404px;top:142px;width:1px;height:28px;background:#fafafa"></div>
<div style="left:1530px;top:142px;width:1px;height:28px;background:#828282"></div>
<div style="left:1531px;top:142px;width:1px;height:28px;background:#fafafa"></div>
<div style="left:662px;top:172px;width:1px;height:28px;background:#828282"></div>
<div style="left:663px;top:172px;width:1px;height:28px;background:#fafafa"></div>
<div style="left:701px;top:172px;width:1px;height:28px;background:#828282"></div>
<div style="left:702px;top:172px;width:1px;height:28px;background:#fafafa"></div>
<div style="left:795px;top:172px;width:1px;height:28px;background:#828282"></div>
<div style="left:796px;top:172px;width:1px;height:28px;background:#fafafa"></div>
<div style="left:890px;top:172px;width:1px;height:28px;background:#828282"></div>
<div style="left:891px;top:172px;width:1px;height:28px;background:#fafafa"></div>
<div style="left:1012px;top:172px;width:1px;height:28px;background:#828282"></div>
<div style="left:1013px;top:172px;width:1px;height:28px;background:#fafafa"></div>
<div style="left:1134px;top:172px;width:1px;height:28px;background:#828282"></div>
<div style="left:1135px;top:172px;width:1px;height:28px;background:#fafafa"></div>
<div style="left:1200px;top:172px;width:1px;height:28px;background:#828282"></div>
<div style="left:1201px;top:172px;width:1px;height:28px;background:#fafafa"></div>
<svg style="left:490px;top:147px" width="19" height="19" viewBox="0 0 19 19" ><defs><radialGradient id="rm" cx="0.4" cy="0.35" r="0.8"><stop offset="0" stop-color="#ee5a5a"/><stop offset="0.7" stop-color="#d92a2a"/><stop offset="1" stop-color="#c01a1e"/></radialGradient></defs>
<circle cx="8.1" cy="8.1" r="7" fill="url(#rm)" stroke="#d23030" stroke-width="0.5"/>
<rect x="4.8" y="7" width="6.3" height="2.1" fill="#fff"/><g transform="translate(10,7)"><g shape-rendering="crispEdges" transform="translate(-1,-1)"><rect x="4" y="0" width="1" height="1" fill="#f8f8f8"/><rect x="3" y="1" width="1" height="1" fill="#f8f8f8"/><rect x="4" y="1" width="1" height="1" fill="#141420"/><rect x="5" y="1" width="1" height="1" fill="#f8f8f8"/><rect x="2" y="2" width="1" height="1" fill="#f8f8f8"/><rect x="3" y="2" width="1" height="1" fill="#141420"/><rect x="4" y="2" width="1" height="1" fill="#ffe262"/><rect x="5" y="2" width="1" height="1" fill="#141420"/><rect x="6" y="2" width="1" height="1" fill="#f8f8f8"/><rect x="1" y="3" width="1" height="1" fill="#f8f8f8"/><rect x="2" y="3" width="2" height="1" fill="#141420"/><rect x="4" y="3" width="1" height="1" fill="#ffe262"/><rect x="5" y="3" width="2" height="1" fill="#141420"/><rect x="7" y="3" width="1" height="1" fill="#f8f8f8"/><rect x="0" y="4" width="1" height="1" fill="#f8f8f8"/><rect x="1" y="4" width="1" height="1" fill="#141420"/><rect x="2" y="4" width="5" height="1" fill="#ffe262"/><rect x="7" y="4" width="1" height="1" fill="#141420"/><rect x="8" y="4" width="1" height="1" fill="#f8f8f8"/><rect x="1" y="5" width="1" height="1" fill="#f8f8f8"/><rect x="2" y="5" width="2" height="1" fill="#141420"/><rect x="4" y="5" width="1" height="1" fill="#ffe262"/><rect x="5" y="5" width="2" height="1" fill="#141420"/><rect x="7" y="5" width="1" height="1" fill="#f8f8f8"/><rect x="2" y="6" width="1" height="1" fill="#f8f8f8"/><rect x="3" y="6" width="1" height="1" fill="#141420"/><rect x="4" y="6" width="1" height="1" fill="#ffe262"/><rect x="5" y="6" width="1" height="1" fill="#141420"/><rect x="6" y="6" width="1" height="1" fill="#f8f8f8"/><rect x="2" y="7" width="2" height="1" fill="#f8f8f8"/><rect x="4" y="7" width="1" height="1" fill="#141420"/><rect x="5" y="7" width="2" height="1" fill="#f8f8f8"/><rect x="1" y="8" width="1" height="1" fill="#f8f8f8"/><rect x="2" y="8" width="5" height="1" fill="#141420"/><rect x="7" y="8" width="1" height="1" fill="#f8f8f8"/><rect x="0" y="9" width="1" height="1" fill="#f8f8f8"/><rect x="1" y="9" width="1" height="1" fill="#141420"/><rect x="2" y="9" width="5" height="1" fill="#ffe262"/><rect x="7" y="9" width="1" height="1" fill="#141420"/><rect x="8" y="9" width="1" height="1" fill="#f8f8f8"/><rect x="1" y="10" width="1" height="1" fill="#f8f8f8"/><rect x="2" y="10" width="5" height="1" fill="#141420"/><rect x="7" y="10" width="1" height="1" fill="#f8f8f8"/><rect x="2" y="11" width="5" height="1" fill="#f8f8f8"/></g></g></svg>
<svg style="left:532px;top:148px" width="13" height="16" viewBox="0 0 13 16" ><defs><linearGradient id="pl" x1="0" y1="0" x2="1" y2="0"><stop offset="0" stop-color="#2c8a1c"/><stop offset="0.5" stop-color="#48b52e"/><stop offset="1" stop-color="#6fd048"/></linearGradient></defs>
<path d="M2 1 L11 8 L2 15 Z" fill="url(#pl)" stroke="#2f8a20" stroke-width="0.9" stroke-linejoin="round"/></svg>
<svg style="left:557px;top:147px" width="17" height="19" viewBox="0 0 17 19" ><path d="M5 3 L14 10 L5 17 Z" fill="#2f9a22" stroke="#2a8a1e" stroke-width="0.6"/>
<path d="M2.4 5.2 L4.2 6 M2 8.4 L3.8 8.2 M3.6 11 L4.8 9.8 M7 2 L7.4 3.4 M10 11.4 L9.2 10" stroke="#000" stroke-width="1"/>
<ellipse cx="7.3" cy="6.8" rx="4.5" ry="3.7" transform="rotate(-28 7.3 6.8)" fill="#e31c1c" stroke="#000" stroke-width="0.8"/>
<circle cx="11.6" cy="3.4" r="1.9" fill="#000"/><path d="M12.4 1.8 L13.6 0.8 M10.6 1.8 L10 0.6" stroke="#000" stroke-width="0.8"/>
<circle cx="5.6" cy="6.4" r="0.75" fill="#fff"/><circle cx="7.8" cy="5" r="0.75" fill="#fff"/><circle cx="7" cy="8.4" r="0.75" fill="#fff"/><circle cx="9" cy="7" r="0.7" fill="#fff"/><circle cx="5.2" cy="8.6" r="0.6" fill="#fff"/></svg>
<svg style="left:1415px;top:148.5px" width="17" height="17" viewBox="0 0 17 17" ><defs><radialGradient id="mg1415" cx="0.4" cy="0.35" r="0.7"><stop offset="0" stop-color="#ffffff"/><stop offset="1" stop-color="#b4e4f8"/></radialGradient></defs>
<path d="M6.4 8.6 L1.4 13.6" stroke="#e09448" stroke-width="2.4" stroke-linecap="round"/>
<circle cx="9.6" cy="5.6" r="4.6" fill="url(#mg1415)" stroke="#b4cfe8" stroke-width="1.3"/><path d="M10 12.9 H15" stroke="#000" stroke-width="1.1"/></svg>
<svg style="left:1443px;top:148.5px" width="17" height="17" viewBox="0 0 17 17" ><defs><radialGradient id="mg1443" cx="0.4" cy="0.35" r="0.7"><stop offset="0" stop-color="#ffffff"/><stop offset="1" stop-color="#b4e4f8"/></radialGradient></defs>
<path d="M6.4 8.6 L1.4 13.6" stroke="#e09448" stroke-width="2.4" stroke-linecap="round"/>
<circle cx="9.6" cy="5.6" r="4.6" fill="url(#mg1443)" stroke="#b4cfe8" stroke-width="1.3"/><path d="M10 12.9 H15" stroke="#000" stroke-width="1.1"/><path d="M12.5 10.4 V15.4" stroke="#000" stroke-width="1.1"/></svg>
<svg style="left:1475px;top:148px" width="17" height="17" viewBox="0 0 17 17" ><rect x="0" y="0" width="16" height="16" fill="#fff"/><path d="M0.5 0 V16 M0 0.5 H16" stroke="#bcc1e0" stroke-width="1"/><path d="M3.5 0 V16 M0 3.5 H16" stroke="#bcc1e0" stroke-width="1"/><path d="M6.5 0 V16 M0 6.5 H16" stroke="#bcc1e0" stroke-width="1"/><path d="M9.5 0 V16 M0 9.5 H16" stroke="#bcc1e0" stroke-width="1"/><path d="M12.5 0 V16 M0 12.5 H16" stroke="#bcc1e0" stroke-width="1"/><path d="M15.5 0 V16 M0 15.5 H16" stroke="#bcc1e0" stroke-width="1"/></svg>
<div style="left:1500px;top:144px;width:23px;height:23px;background:#dce7f8;box-sizing:border-box;border-top:1px solid #6f6f6f;border-left:1px solid #6f6f6f;"></div>
<svg style="left:1504px;top:149px" width="17" height="17" viewBox="0 0 17 17" ><rect x="0" y="0" width="16" height="16" fill="#fff"/><path d="M0.5 0 V16 M0 0.5 H16" stroke="#bcc1e0" stroke-width="1"/><path d="M3.5 0 V16 M0 3.5 H16" stroke="#bcc1e0" stroke-width="1"/><path d="M6.5 0 V16 M0 6.5 H16" stroke="#bcc1e0" stroke-width="1"/><path d="M9.5 0 V16 M0 9.5 H16" stroke="#bcc1e0" stroke-width="1"/><path d="M12.5 0 V16 M0 12.5 H16" stroke="#bcc1e0" stroke-width="1"/><path d="M15.5 0 V16 M0 15.5 H16" stroke="#bcc1e0" stroke-width="1"/><path d="M3.2 8.2 L7.4 12.6 L14.8 4" fill="none" stroke="#10168a" stroke-width="2"/></svg>
<svg style="left:1541px;top:147px" width="16" height="14" viewBox="0 0 16 14" ><rect x="0.9" y="1.5" width="14" height="11" rx="1.4" fill="#fff400" stroke="#d4883c" stroke-width="1.3"/>
<path d="M2.8 4.5 H13 M2.8 7 H13 M2.8 9.5 H13" stroke="#2a2a00" stroke-width="1" stroke-dasharray="3 0.7 4 0.7 2 0.7"/></svg>
<svg style="left:489px;top:176px" width="17" height="19" viewBox="0 0 17 19" ><rect x="1" y="1" width="1.6" height="17" fill="#a9a6c4"/><rect x="4.5" y="2.5" width="8" height="6" fill="url(#gY)" stroke="#dcae6a" stroke-width="0.9"/><rect x="4.5" y="10.5" width="10" height="6" fill="url(#gB)" stroke="#b4bbd8" stroke-width="0.9"/></svg>
<svg style="left:520px;top:176px" width="17" height="19" viewBox="0 0 17 19" ><rect x="13.2" y="1" width="1.6" height="17" fill="#a9a6c4"/><rect x="3.5" y="2.5" width="8" height="6" fill="url(#gY)" stroke="#dcae6a" stroke-width="0.9"/><rect x="1.5" y="10.5" width="10" height="6" fill="url(#gB)" stroke="#b4bbd8" stroke-width="0.9"/></svg>
<svg style="left:546px;top:176px" width="19" height="17" viewBox="0 0 19 17" ><rect x="1" y="1" width="17" height="1.6" fill="#a9a6c4"/><rect x="2.5" y="4.5" width="6" height="6" fill="url(#gY)" stroke="#dcae6a" stroke-width="0.9"/><rect x="10.5" y="4.5" width="6" height="10" fill="url(#gB)" stroke="#b4bbd8" stroke-width="0.9"/></svg>
<svg style="left:575px;top:178px" width="19" height="18" viewBox="0 0 19 18" ><rect x="1" y="15.2" width="17" height="1.6" fill="#a9a6c4"/><rect x="2.5" y="7.5" width="6" height="6" fill="url(#gY)" stroke="#dcae6a" stroke-width="0.9"/><rect x="10.5" y="3.5" width="6" height="10" fill="url(#gB)" stroke="#b4bbd8" stroke-width="0.9"/></svg>
<svg style="left:604px;top:176px" width="19" height="19" viewBox="0 0 19 19" ><rect x="1" y="1" width="1.6" height="17" fill="#a9a6c4"/><rect x="16.2" y="1" width="1.6" height="17" fill="#a9a6c4"/><rect x="4.5" y="2.5" width="10" height="6" fill="url(#gY)" stroke="#dcae6a" stroke-width="0.9"/><rect x="4.5" y="10.5" width="10" height="6" fill="url(#gB)" stroke="#b4bbd8" stroke-width="0.9"/></svg>
<svg style="left:633px;top:176px" width="19" height="19" viewBox="0 0 19 19" ><rect x="1" y="1" width="17" height="1.6" fill="#a9a6c4"/><rect x="1" y="16.2" width="17" height="1.6" fill="#a9a6c4"/><rect x="2.5" y="4.5" width="6" height="10" fill="url(#gY)" stroke="#dcae6a" stroke-width="0.9"/><rect x="10.5" y="4.5" width="6" height="10" fill="url(#gB)" stroke="#b4bbd8" stroke-width="0.9"/></svg>
<svg style="left:672px;top:176px" width="19" height="19" viewBox="0 0 19 19" ><rect x="1" y="1" width="1.8" height="17" fill="#2a2350"/><rect x="16" y="1" width="1.8" height="17" fill="#2a2350"/>
<rect x="4.5" y="2.5" width="10" height="6" fill="#f8dc1a" stroke="#c0701a" stroke-width="1"/><rect x="4.5" y="10.5" width="10" height="6" fill="#8fc4ec" stroke="#1a6ac8" stroke-width="1"/>
<path d="M11.6 4 L12.6 7.4 L16.2 6.4 L13.6 9 L16.4 11.6 L12.8 10.8 L11.6 14.4 L10.6 10.8 L7 11.8 L9.6 9 L7 6.4 L10.6 7.4 Z" fill="#fff" stroke="#f5a21a" stroke-width="1.2" stroke-linejoin="round"/></svg>
<svg style="left:711px;top:181px" width="17" height="10" viewBox="0 0 17 10" ><path d="M1 4.6 H5.6" stroke="#a9a6c4" stroke-width="1.8"/><path d="M3.6 1.2 L7.2 4.6 L3.6 8 Z" fill="#a9a6c4"/><rect x="8.5" y="1.5" width="7" height="7" fill="url(#gB)" stroke="#b4bbd8" stroke-width="1"/></svg>
<svg style="left:743px;top:177px" width="10" height="16" viewBox="0 0 10 16" ><path d="M5 1 V5.6" stroke="#a9a6c4" stroke-width="1.8"/><path d="M1.6 3.6 L5 7.2 L8.4 3.6 Z" fill="#a9a6c4"/><rect x="1.5" y="8.5" width="7" height="6.4" fill="url(#gB)" stroke="#b4bbd8" stroke-width="1"/></svg>
<svg style="left:767px;top:178px" width="17" height="16" viewBox="0 0 17 16" ><path d="M1.6 1.6 L6.6 6.6" stroke="#a9a6c4" stroke-width="2"/><path d="M7.8 2.8 V7.8 H2.8 Z" fill="#a9a6c4"/><rect x="8.5" y="8.5" width="7" height="6" fill="url(#gB)" stroke="#b4bbd8" stroke-width="1"/></svg>
<svg style="left:805px;top:177px" width="18" height="18" viewBox="0 0 18 18" ><path d="M1.6 2.6 L6.4 7.4" stroke="#10128a" stroke-width="2"/><path d="M7.4 3.4 V8.4 H2.4 Z" fill="#10128a"/>
<rect x="8.5" y="8.5" width="6" height="6" fill="#cfe4fb" stroke="#1a6ad8" stroke-width="1"/><rect x="10.5" y="10.5" width="6" height="6" fill="#9fc8f6" stroke="#1a6ad8" stroke-width="1"/>
<path d="M14 1 V6 M11.5 3.5 H16.5" stroke="#000" stroke-width="1.1"/></svg>
<svg style="left:836px;top:177px" width="16" height="16" viewBox="0 0 16 16" ><rect x="1.5" y="5.5" width="9" height="9" fill="#9fc8f6" stroke="#1a6ad8" stroke-width="1.2"/><rect x="3" y="7" width="3" height="3.6" fill="#e4f0fd"/><path d="M3 10.8 H9 V7" stroke="#e4f0fd" fill="none" stroke-width="1"/>
<path d="M11.6 1 V6 M9.1 3.5 H14.1" stroke="#000" stroke-width="1.1"/></svg>
<svg style="left:862px;top:183px" width="17" height="9" viewBox="0 0 17 9" ><rect x="1" y="1" width="14.6" height="6.6" fill="#9fc8f6" stroke="#1a6ad8" stroke-width="1.2"/>
<path d="M3.6 4.3 H10" stroke="#000" stroke-width="1.2"/><path d="M9 1.8 L12.4 4.3 L9 6.8 Z" fill="#000"/></svg>
<svg style="left:901px;top:179px" width="18" height="16" viewBox="0 0 18 16" ><circle cx="5.4" cy="5.6" r="3.6" fill="none" stroke="#9a9a9a" stroke-width="2.4" stroke-dasharray="1.6 1.2"/><circle cx="5.4" cy="5.6" r="3" fill="#e4e4e4" stroke="#8a8a8a" stroke-width="0.9"/><circle cx="5.4" cy="5.6" r="1.3" fill="#f0f0f0" stroke="#8a8a8a" stroke-width="0.7"/><g transform="translate(9,5)"><g shape-rendering="crispEdges" transform="translate(-1,-1)"><rect x="4" y="0" width="1" height="1" fill="#f8f8f8"/><rect x="3" y="1" width="1" height="1" fill="#f8f8f8"/><rect x="4" y="1" width="1" height="1" fill="#141420"/><rect x="5" y="1" width="1" height="1" fill="#f8f8f8"/><rect x="2" y="2" width="1" height="1" fill="#f8f8f8"/><rect x="3" y="2" width="1" height="1" fill="#141420"/><rect x="4" y="2" width="1" height="1" fill="#ffe262"/><rect x="5" y="2" width="1" height="1" fill="#141420"/><rect x="6" y="2" width="1" height="1" fill="#f8f8f8"/><rect x="1" y="3" width="1" height="1" fill="#f8f8f8"/><rect x="2" y="3" width="2" height="1" fill="#141420"/><rect x="4" y="3" width="1" height="1" fill="#ffe262"/><rect x="5" y="3" width="2" height="1" fill="#141420"/><rect x="7" y="3" width="1" height="1" fill="#f8f8f8"/><rect x="0" y="4" width="1" height="1" fill="#f8f8f8"/><rect x="1" y="4" width="1" height="1" fill="#141420"/><rect x="2" y="4" width="5" height="1" fill="#ffe262"/><rect x="7" y="4" width="1" height="1" fill="#141420"/><rect x="8" y="4" width="1" height="1" fill="#f8f8f8"/><rect x="1" y="5" width="1" height="1" fill="#f8f8f8"/><rect x="2" y="5" width="2" height="1" fill="#141420"/><rect x="4" y="5" width="1" height="1" fill="#ffe262"/><rect x="5" y="5" width="2" height="1" fill="#141420"/><rect x="7" y="5" width="1" height="1" fill="#f8f8f8"/><rect x="2" y="6" width="1" height="1" fill="#f8f8f8"/><rect x="3" y="6" width="1" height="1" fill="#141420"/><rect x="4" y="6" width="1" height="1" fill="#ffe262"/><rect x="5" y="6" width="1" height="1" fill="#141420"/><rect x="6" y="6" width="1" height="1" fill="#f8f8f8"/><rect x="2" y="7" width="2" height="1" fill="#f8f8f8"/><rect x="4" y="7" width="1" height="1" fill="#141420"/><rect x="5" y="7" width="2" height="1" fill="#f8f8f8"/><rect x="1" y="8" width="1" height="1" fill="#f8f8f8"/><rect x="2" y="8" width="5" height="1" fill="#141420"/><rect x="7" y="8" width="1" height="1" fill="#f8f8f8"/><rect x="0" y="9" width="1" height="1" fill="#f8f8f8"/><rect x="1" y="9" width="1" height="1" fill="#141420"/><rect x="2" y="9" width="5" height="1" fill="#ffe262"/><rect x="7" y="9" width="1" height="1" fill="#141420"/><rect x="8" y="9" width="1" height="1" fill="#f8f8f8"/><rect x="1" y="10" width="1" height="1" fill="#f8f8f8"/><rect x="2" y="10" width="5" height="1" fill="#141420"/><rect x="7" y="10" width="1" height="1" fill="#f8f8f8"/><rect x="2" y="11" width="5" height="1" fill="#f8f8f8"/></g></g></svg>
<svg style="left:929px;top:179px" width="18" height="16" viewBox="0 0 18 16" ><circle cx="5.4" cy="5.6" r="3.6" fill="none" stroke="#9a9a9a" stroke-width="2" stroke-dasharray="1.6 1.2"/>
<path d="M1.8 2 L9.6 10 M9.6 2 L1.8 10" stroke="#b81a30" stroke-width="2.5"/><g transform="translate(9,5)"><g shape-rendering="crispEdges" transform="translate(-1,-1)"><rect x="4" y="0" width="1" height="1" fill="#f8f8f8"/><rect x="3" y="1" width="1" height="1" fill="#f8f8f8"/><rect x="4" y="1" width="1" height="1" fill="#141420"/><rect x="5" y="1" width="1" height="1" fill="#f8f8f8"/><rect x="2" y="2" width="1" height="1" fill="#f8f8f8"/><rect x="3" y="2" width="1" height="1" fill="#141420"/><rect x="4" y="2" width="1" height="1" fill="#ffe262"/><rect x="5" y="2" width="1" height="1" fill="#141420"/><rect x="6" y="2" width="1" height="1" fill="#f8f8f8"/><rect x="1" y="3" width="1" height="1" fill="#f8f8f8"/><rect x="2" y="3" width="2" height="1" fill="#141420"/><rect x="4" y="3" width="1" height="1" fill="#ffe262"/><rect x="5" y="3" width="2" height="1" fill="#141420"/><rect x="7" y="3" width="1" height="1" fill="#f8f8f8"/><rect x="0" y="4" width="1" height="1" fill="#f8f8f8"/><rect x="1" y="4" width="1" height="1" fill="#141420"/><rect x="2" y="4" width="5" height="1" fill="#ffe262"/><rect x="7" y="4" width="1" height="1" fill="#141420"/><rect x="8" y="4" width="1" height="1" fill="#f8f8f8"/><rect x="1" y="5" width="1" height="1" fill="#f8f8f8"/><rect x="2" y="5" width="2" height="1" fill="#141420"/><rect x="4" y="5" width="1" height="1" fill="#ffe262"/><rect x="5" y="5" width="2" height="1" fill="#141420"/><rect x="7" y="5" width="1" height="1" fill="#f8f8f8"/><rect x="2" y="6" width="1" height="1" fill="#f8f8f8"/><rect x="3" y="6" width="1" height="1" fill="#141420"/><rect x="4" y="6" width="1" height="1" fill="#ffe262"/><rect x="5" y="6" width="1" height="1" fill="#141420"/><rect x="6" y="6" width="1" height="1" fill="#f8f8f8"/><rect x="2" y="7" width="2" height="1" fill="#f8f8f8"/><rect x="4" y="7" width="1" height="1" fill="#141420"/><rect x="5" y="7" width="2" height="1" fill="#f8f8f8"/><rect x="1" y="8" width="1" height="1" fill="#f8f8f8"/><rect x="2" y="8" width="5" height="1" fill="#141420"/><rect x="7" y="8" width="1" height="1" fill="#f8f8f8"/><rect x="0" y="9" width="1" height="1" fill="#f8f8f8"/><rect x="1" y="9" width="1" height="1" fill="#141420"/><rect x="2" y="9" width="5" height="1" fill="#ffe262"/><rect x="7" y="9" width="1" height="1" fill="#141420"/><rect x="8" y="9" width="1" height="1" fill="#f8f8f8"/><rect x="1" y="10" width="1" height="1" fill="#f8f8f8"/><rect x="2" y="10" width="5" height="1" fill="#141420"/><rect x="7" y="10" width="1" height="1" fill="#f8f8f8"/><rect x="2" y="11" width="5" height="1" fill="#f8f8f8"/></g></g></svg>
<svg style="left:958px;top:179px" width="18" height="16" viewBox="0 0 18 16" ><path d="M4 1.4 H10 L7 5 H9.8 L3 10.8 L4.8 6.4 H1.4 Z" fill="#fbd93a" stroke="#e0a81a" stroke-width="0.9" stroke-linejoin="round"/><g transform="translate(8,5)"><g shape-rendering="crispEdges" transform="translate(-1,-1)"><rect x="4" y="0" width="1" height="1" fill="#f8f8f8"/><rect x="3" y="1" width="1" height="1" fill="#f8f8f8"/><rect x="4" y="1" width="1" height="1" fill="#141420"/><rect x="5" y="1" width="1" height="1" fill="#f8f8f8"/><rect x="2" y="2" width="1" height="1" fill="#f8f8f8"/><rect x="3" y="2" width="1" height="1" fill="#141420"/><rect x="4" y="2" width="1" height="1" fill="#ffe262"/><rect x="5" y="2" width="1" height="1" fill="#141420"/><rect x="6" y="2" width="1" height="1" fill="#f8f8f8"/><rect x="1" y="3" width="1" height="1" fill="#f8f8f8"/><rect x="2" y="3" width="2" height="1" fill="#141420"/><rect x="4" y="3" width="1" height="1" fill="#ffe262"/><rect x="5" y="3" width="2" height="1" fill="#141420"/><rect x="7" y="3" width="1" height="1" fill="#f8f8f8"/><rect x="0" y="4" width="1" height="1" fill="#f8f8f8"/><rect x="1" y="4" width="1" height="1" fill="#141420"/><rect x="2" y="4" width="5" height="1" fill="#ffe262"/><rect x="7" y="4" width="1" height="1" fill="#141420"/><rect x="8" y="4" width="1" height="1" fill="#f8f8f8"/><rect x="1" y="5" width="1" height="1" fill="#f8f8f8"/><rect x="2" y="5" width="2" height="1" fill="#141420"/><rect x="4" y="5" width="1" height="1" fill="#ffe262"/><rect x="5" y="5" width="2" height="1" fill="#141420"/><rect x="7" y="5" width="1" height="1" fill="#f8f8f8"/><rect x="2" y="6" width="1" height="1" fill="#f8f8f8"/><rect x="3" y="6" width="1" height="1" fill="#141420"/><rect x="4" y="6" width="1" height="1" fill="#ffe262"/><rect x="5" y="6" width="1" height="1" fill="#141420"/><rect x="6" y="6" width="1" height="1" fill="#f8f8f8"/><rect x="2" y="7" width="2" height="1" fill="#f8f8f8"/><rect x="4" y="7" width="1" height="1" fill="#141420"/><rect x="5" y="7" width="2" height="1" fill="#f8f8f8"/><rect x="1" y="8" width="1" height="1" fill="#f8f8f8"/><rect x="2" y="8" width="5" height="1" fill="#141420"/><rect x="7" y="8" width="1" height="1" fill="#f8f8f8"/><rect x="0" y="9" width="1" height="1" fill="#f8f8f8"/><rect x="1" y="9" width="1" height="1" fill="#141420"/><rect x="2" y="9" width="5" height="1" fill="#ffe262"/><rect x="7" y="9" width="1" height="1" fill="#141420"/><rect x="8" y="9" width="1" height="1" fill="#f8f8f8"/><rect x="1" y="10" width="1" height="1" fill="#f8f8f8"/><rect x="2" y="10" width="5" height="1" fill="#141420"/><rect x="7" y="10" width="1" height="1" fill="#f8f8f8"/><rect x="2" y="11" width="5" height="1" fill="#f8f8f8"/></g></g></svg>
<svg style="left:986px;top:179px" width="18" height="16" viewBox="0 0 18 16" ><rect x="2.5" y="2.5" width="9" height="7" rx="1.2" fill="#f2f7fe" stroke="#9fc0f0" stroke-width="1.1"/><path d="M1 11.6 L2.6 9.6 H11.4 L12.8 11.6 Z" fill="#d4e4fa" stroke="#8fb4ea" stroke-width="0.9"/><g transform="translate(8,5)"><g shape-rendering="crispEdges" transform="translate(-1,-1)"><rect x="4" y="0" width="1" height="1" fill="#f8f8f8"/><rect x="3" y="1" width="1" height="1" fill="#f8f8f8"/><rect x="4" y="1" width="1" height="1" fill="#141420"/><rect x="5" y="1" width="1" height="1" fill="#f8f8f8"/><rect x="2" y="2" width="1" height="1" fill="#f8f8f8"/><rect x="3" y="2" width="1" height="1" fill="#141420"/><rect x="4" y="2" width="1" height="1" fill="#ffe262"/><rect x="5" y="2" width="1" height="1" fill="#141420"/><rect x="6" y="2" width="1" height="1" fill="#f8f8f8"/><rect x="1" y="3" width="1" height="1" fill="#f8f8f8"/><rect x="2" y="3" width="2" height="1" fill="#141420"/><rect x="4" y="3" width="1" height="1" fill="#ffe262"/><rect x="5" y="3" width="2" height="1" fill="#141420"/><rect x="7" y="3" width="1" height="1" fill="#f8f8f8"/><rect x="0" y="4" width="1" height="1" fill="#f8f8f8"/><rect x="1" y="4" width="1" height="1" fill="#141420"/><rect x="2" y="4" width="5" height="1" fill="#ffe262"/><rect x="7" y="4" width="1" height="1" fill="#141420"/><rect x="8" y="4" width="1" height="1" fill="#f8f8f8"/><rect x="1" y="5" width="1" height="1" fill="#f8f8f8"/><rect x="2" y="5" width="2" height="1" fill="#141420"/><rect x="4" y="5" width="1" height="1" fill="#ffe262"/><rect x="5" y="5" width="2" height="1" fill="#141420"/><rect x="7" y="5" width="1" height="1" fill="#f8f8f8"/><rect x="2" y="6" width="1" height="1" fill="#f8f8f8"/><rect x="3" y="6" width="1" height="1" fill="#141420"/><rect x="4" y="6" width="1" height="1" fill="#ffe262"/><rect x="5" y="6" width="1" height="1" fill="#141420"/><rect x="6" y="6" width="1" height="1" fill="#f8f8f8"/><rect x="2" y="7" width="2" height="1" fill="#f8f8f8"/><rect x="4" y="7" width="1" height="1" fill="#141420"/><rect x="5" y="7" width="2" height="1" fill="#f8f8f8"/><rect x="1" y="8" width="1" height="1" fill="#f8f8f8"/><rect x="2" y="8" width="5" height="1" fill="#141420"/><rect x="7" y="8" width="1" height="1" fill="#f8f8f8"/><rect x="0" y="9" width="1" height="1" fill="#f8f8f8"/><rect x="1" y="9" width="1" height="1" fill="#141420"/><rect x="2" y="9" width="5" height="1" fill="#ffe262"/><rect x="7" y="9" width="1" height="1" fill="#141420"/><rect x="8" y="9" width="1" height="1" fill="#f8f8f8"/><rect x="1" y="10" width="1" height="1" fill="#f8f8f8"/><rect x="2" y="10" width="5" height="1" fill="#141420"/><rect x="7" y="10" width="1" height="1" fill="#f8f8f8"/><rect x="2" y="11" width="5" height="1" fill="#f8f8f8"/></g></g></svg>
<svg style="left:1022px;top:178px" width="18" height="17" viewBox="0 0 18 17" ><rect x="4" y="0" width="4" height="3" fill="#f8f8f8"/><rect x="5" y="1" width="2" height="2" fill="#c00010"/><rect x="1.5" y="3.5" width="9" height="4" fill="#b4c4e8" stroke="#3a2a60" stroke-width="1"/><g transform="translate(10,6)"><g shape-rendering="crispEdges" transform="translate(-1,-1)"><rect x="4" y="0" width="1" height="1" fill="#f8f8f8"/><rect x="3" y="1" width="1" height="1" fill="#f8f8f8"/><rect x="4" y="1" width="1" height="1" fill="#141420"/><rect x="5" y="1" width="1" height="1" fill="#f8f8f8"/><rect x="2" y="2" width="1" height="1" fill="#f8f8f8"/><rect x="3" y="2" width="1" height="1" fill="#141420"/><rect x="4" y="2" width="1" height="1" fill="#ffe262"/><rect x="5" y="2" width="1" height="1" fill="#141420"/><rect x="6" y="2" width="1" height="1" fill="#f8f8f8"/><rect x="1" y="3" width="1" height="1" fill="#f8f8f8"/><rect x="2" y="3" width="2" height="1" fill="#141420"/><rect x="4" y="3" width="1" height="1" fill="#ffe262"/><rect x="5" y="3" width="2" height="1" fill="#141420"/><rect x="7" y="3" width="1" height="1" fill="#f8f8f8"/><rect x="0" y="4" width="1" height="1" fill="#f8f8f8"/><rect x="1" y="4" width="1" height="1" fill="#141420"/><rect x="2" y="4" width="5" height="1" fill="#ffe262"/><rect x="7" y="4" width="1" height="1" fill="#141420"/><rect x="8" y="4" width="1" height="1" fill="#f8f8f8"/><rect x="1" y="5" width="1" height="1" fill="#f8f8f8"/><rect x="2" y="5" width="2" height="1" fill="#141420"/><rect x="4" y="5" width="1" height="1" fill="#ffe262"/><rect x="5" y="5" width="2" height="1" fill="#141420"/><rect x="7" y="5" width="1" height="1" fill="#f8f8f8"/><rect x="2" y="6" width="1" height="1" fill="#f8f8f8"/><rect x="3" y="6" width="1" height="1" fill="#141420"/><rect x="4" y="6" width="1" height="1" fill="#ffe262"/><rect x="5" y="6" width="1" height="1" fill="#141420"/><rect x="6" y="6" width="1" height="1" fill="#f8f8f8"/><rect x="2" y="7" width="2" height="1" fill="#f8f8f8"/><rect x="4" y="7" width="1" height="1" fill="#141420"/><rect x="5" y="7" width="2" height="1" fill="#f8f8f8"/><rect x="1" y="8" width="1" height="1" fill="#f8f8f8"/><rect x="2" y="8" width="5" height="1" fill="#141420"/><rect x="7" y="8" width="1" height="1" fill="#f8f8f8"/><rect x="0" y="9" width="1" height="1" fill="#f8f8f8"/><rect x="1" y="9" width="1" height="1" fill="#141420"/><rect x="2" y="9" width="5" height="1" fill="#ffe262"/><rect x="7" y="9" width="1" height="1" fill="#141420"/><rect x="8" y="9" width="1" height="1" fill="#f8f8f8"/><rect x="1" y="10" width="1" height="1" fill="#f8f8f8"/><rect x="2" y="10" width="5" height="1" fill="#141420"/><rect x="7" y="10" width="1" height="1" fill="#f8f8f8"/><rect x="2" y="11" width="5" height="1" fill="#f8f8f8"/></g></g></svg>
<svg style="left:1050px;top:178px" width="18" height="17" viewBox="0 0 18 17" ><rect x="1.5" y="3.5" width="9" height="4" fill="#b4c4e8" stroke="#3a2a60" stroke-width="1"/><g transform="translate(10,6)"><g shape-rendering="crispEdges" transform="translate(-1,-1)"><rect x="4" y="0" width="1" height="1" fill="#f8f8f8"/><rect x="3" y="1" width="1" height="1" fill="#f8f8f8"/><rect x="4" y="1" width="1" height="1" fill="#141420"/><rect x="5" y="1" width="1" height="1" fill="#f8f8f8"/><rect x="2" y="2" width="1" height="1" fill="#f8f8f8"/><rect x="3" y="2" width="1" height="1" fill="#141420"/><rect x="4" y="2" width="1" height="1" fill="#ffe262"/><rect x="5" y="2" width="1" height="1" fill="#141420"/><rect x="6" y="2" width="1" height="1" fill="#f8f8f8"/><rect x="1" y="3" width="1" height="1" fill="#f8f8f8"/><rect x="2" y="3" width="2" height="1" fill="#141420"/><rect x="4" y="3" width="1" height="1" fill="#ffe262"/><rect x="5" y="3" width="2" height="1" fill="#141420"/><rect x="7" y="3" width="1" height="1" fill="#f8f8f8"/><rect x="0" y="4" width="1" height="1" fill="#f8f8f8"/><rect x="1" y="4" width="1" height="1" fill="#141420"/><rect x="2" y="4" width="5" height="1" fill="#ffe262"/><rect x="7" y="4" width="1" height="1" fill="#141420"/><rect x="8" y="4" width="1" height="1" fill="#f8f8f8"/><rect x="1" y="5" width="1" height="1" fill="#f8f8f8"/><rect x="2" y="5" width="2" height="1" fill="#141420"/><rect x="4" y="5" width="1" height="1" fill="#ffe262"/><rect x="5" y="5" width="2" height="1" fill="#141420"/><rect x="7" y="5" width="1" height="1" fill="#f8f8f8"/><rect x="2" y="6" width="1" height="1" fill="#f8f8f8"/><rect x="3" y="6" width="1" height="1" fill="#141420"/><rect x="4" y="6" width="1" height="1" fill="#ffe262"/><rect x="5" y="6" width="1" height="1" fill="#141420"/><rect x="6" y="6" width="1" height="1" fill="#f8f8f8"/><rect x="2" y="7" width="2" height="1" fill="#f8f8f8"/><rect x="4" y="7" width="1" height="1" fill="#141420"/><rect x="5" y="7" width="2" height="1" fill="#f8f8f8"/><rect x="1" y="8" width="1" height="1" fill="#f8f8f8"/><rect x="2" y="8" width="5" height="1" fill="#141420"/><rect x="7" y="8" width="1" height="1" fill="#f8f8f8"/><rect x="0" y="9" width="1" height="1" fill="#f8f8f8"/><rect x="1" y="9" width="1" height="1" fill="#141420"/><rect x="2" y="9" width="5" height="1" fill="#ffe262"/><rect x="7" y="9" width="1" height="1" fill="#141420"/><rect x="8" y="9" width="1" height="1" fill="#f8f8f8"/><rect x="1" y="10" width="1" height="1" fill="#f8f8f8"/><rect x="2" y="10" width="5" height="1" fill="#141420"/><rect x="7" y="10" width="1" height="1" fill="#f8f8f8"/><rect x="2" y="11" width="5" height="1" fill="#f8f8f8"/></g></g></svg>
<svg style="left:1082px;top:179px" width="9" height="14" viewBox="0 0 9 14" ><rect x="1.5" y="1.5" width="6" height="3" fill="#c4d6d8" stroke="#a4b8bc" stroke-width="0.9"/><rect x="1.5" y="9.5" width="6" height="3" fill="#c4d6d8" stroke="#a4b8bc" stroke-width="0.9"/><path d="M4.5 4.8 V9.4" stroke="#f06a6a" stroke-width="1"/></svg>
<svg style="left:1110px;top:179px" width="15" height="14" viewBox="0 0 15 14" ><rect x="1.5" y="1.5" width="6" height="3" fill="#c4d6d8" stroke="#a4b8bc" stroke-width="0.9"/><rect x="1.5" y="9.5" width="6" height="3" fill="#c4d6d8" stroke="#a4b8bc" stroke-width="0.9"/><path d="M4.5 4.8 V9.4" stroke="#f06a6a" stroke-width="1"/><path d="M9 3 H11.4 Q12.6 3 12.6 4.2 V9.8 Q12.6 11 11.4 11 H9" fill="none" stroke="#555" stroke-width="1"/><path d="M10.6 1 L8.6 3 L10.6 5 M10.6 9 L8.6 11 L10.6 13" fill="none" stroke="#555" stroke-width="1"/></svg>
<svg style="left:1145px;top:182px" width="17" height="9" viewBox="0 0 17 9" ><rect x="1.5" y="1.5" width="2.6" height="6" fill="#cfd2ea" stroke="#a8a4c4" stroke-width="1"/><rect x="12" y="1.5" width="2.6" height="6" fill="#cfd2ea" stroke="#a8a4c4" stroke-width="1"/><path d="M4.4 4.5 H12" stroke="#8a8a9a" stroke-width="0.9"/><path d="M6.4 2.4 L10 6.6 M10 2.4 L6.4 6.6" stroke="#e0506a" stroke-width="1"/></svg>
<svg style="left:1172px;top:179px" width="18" height="13" viewBox="0 0 18 13" ><rect x="1.5" y="1.5" width="2.6" height="5" fill="#cfd2ea" stroke="#a8a4c4" stroke-width="1"/><rect x="13" y="5.5" width="2.6" height="6" fill="#cfd2ea" stroke="#a8a4c4" stroke-width="1"/><path d="M4.4 4 H7 V8.4 H13" fill="none" stroke="#6a6a7a" stroke-width="1"/><text x="10.4" y="6" font-size="7.5" font-weight="bold" fill="#e0405a" text-anchor="middle" font-family="Liberation Sans">?</text></svg>
<svg style="left:1210px;top:178px" width="18" height="16" viewBox="0 0 18 16" ><rect x="1.5" y="1.5" width="2.6" height="5" fill="#cfd2ea" stroke="#a8a4c4" stroke-width="1"/><rect x="13.5" y="8.5" width="2.6" height="6" fill="#cfd2ea" stroke="#a8a4c4" stroke-width="1"/><path d="M4.4 3 L13.4 12" stroke="#6a6a7a" stroke-width="1"/></svg>
<svg style="left:1238px;top:179px" width="18" height="14" viewBox="0 0 18 14" ><rect x="1.5" y="1.5" width="2.6" height="5" fill="#cfd2ea" stroke="#a8a4c4" stroke-width="1"/><rect x="13.5" y="6.5" width="2.6" height="6" fill="#cfd2ea" stroke="#a8a4c4" stroke-width="1"/><path d="M4.4 3.6 L10.6 9.4 H13.4" fill="none" stroke="#6a6a7a" stroke-width="1"/></svg>
<svg style="left:1266px;top:179px" width="18" height="14" viewBox="0 0 18 14" ><rect x="1.5" y="1.5" width="2.6" height="5" fill="#cfd2ea" stroke="#a8a4c4" stroke-width="1"/><rect x="13.5" y="6.5" width="2.6" height="6" fill="#cfd2ea" stroke="#a8a4c4" stroke-width="1"/><path d="M4.4 4 H7 L8.6 9.4 H13.4" fill="none" stroke="#6a6a7a" stroke-width="1"/></svg>
<svg style="left:1294px;top:179px" width="18" height="14" viewBox="0 0 18 14" ><rect x="1.5" y="1.5" width="2.6" height="5" fill="#cfd2ea" stroke="#a8a4c4" stroke-width="1"/><rect x="13.5" y="6.5" width="2.6" height="6" fill="#cfd2ea" stroke="#a8a4c4" stroke-width="1"/><path d="M4.4 4 H8 V9.4 H13.4" fill="none" stroke="#6a6a7a" stroke-width="1"/></svg>
<svg style="left:1542px;top:178.5px" width="15" height="15" viewBox="0 0 16 16" ><defs><radialGradient id="hg1542178.5" cx="0.42" cy="0.3" r="0.8"><stop offset="0" stop-color="#b9d0f7"/><stop offset="0.55" stop-color="#5c8ae4"/><stop offset="1" stop-color="#3866cc"/></radialGradient></defs>
<circle cx="8" cy="8" r="7.2" fill="url(#hg1542178.5)" stroke="#7d9de0" stroke-width="0.9"/>
<text x="8" y="12.4" font-family="Liberation Sans" font-weight="bold" font-size="12" text-anchor="middle" fill="#fff">?</text></svg>
<div style="left:484px;top:202px;width:1078px;height:692px;background:#fff;box-sizing:border-box;border:1px solid #9a9a9a;border-right:none;border-bottom:none;"></div>
<div style="left:1545px;top:203px;width:17px;height:674px;background:#f0f0f0;"></div>
<div style="left:1547px;top:221px;width:14px;height:554px;background:#cdcdcd;"></div>
<div style="left:485px;top:877px;width:1077px;height:16px;background:#f0f0f0;"></div>
<div style="left:503px;top:878px;width:896px;height:14px;background:#cdcdcd;"></div>
<svg style="left:1550px;top:209px" width="9" height="6" viewBox="0 0 9 6" ><defs><linearGradient id="sa" x1="0" y1="0" x2="0" y2="1"><stop offset="0" stop-color="#9a9a9a"/><stop offset="1" stop-color="#303030"/></linearGradient></defs><path d="M0.6 5 L4.5 0.8 L8.4 5 Z" fill="url(#sa)"/></svg>
<svg style="left:1550px;top:864px" width="9" height="6" viewBox="0 0 9 6" ><defs><linearGradient id="sb" x1="0" y1="0" x2="0" y2="1"><stop offset="0" stop-color="#303030"/><stop offset="1" stop-color="#8a8a8a"/></linearGradient></defs><path d="M0.6 1 L4.5 5.2 L8.4 1 Z" fill="url(#sb)"/></svg>
<svg style="left:489px;top:880px" width="8" height="10" viewBox="0 0 8 10" ><path d="M6.2 0.8 L2 5 L6.2 9.2 Z" fill="#303030"/></svg>
<svg style="left:1532px;top:880px" width="8" height="10" viewBox="0 0 8 10" ><path d="M1.8 0.8 L6 5 L1.8 9.2 Z" fill="#303030"/></svg>
<svg style="left:493px;top:210px" width="9" height="3" viewBox="0 0 9 3" shape-rendering="crispEdges"><rect x="0" y="0" width="4" height="1" fill="#005858"/><rect x="0" y="1" width="9" height="1" fill="#005858"/><rect x="0" y="2" width="4" height="1" fill="#005858"/></svg>
<svg style="left:496px;top:214px" width="7" height="7" viewBox="0 0 7 7" shape-rendering="crispEdges"><rect x="3" y="0" width="1" height="1" fill="#000"/><rect x="2" y="1" width="1" height="1" fill="#000"/><rect x="3" y="1" width="1" height="1" fill="#fff"/><rect x="4" y="1" width="1" height="1" fill="#000"/><rect x="1" y="2" width="2" height="1" fill="#000"/><rect x="3" y="2" width="1" height="1" fill="#fff"/><rect x="4" y="2" width="2" height="1" fill="#000"/><rect x="0" y="3" width="1" height="1" fill="#000"/><rect x="1" y="3" width="5" height="1" fill="#fff"/><rect x="6" y="3" width="1" height="1" fill="#000"/><rect x="1" y="4" width="2" height="1" fill="#000"/><rect x="3" y="4" width="1" height="1" fill="#fff"/><rect x="4" y="4" width="2" height="1" fill="#000"/><rect x="2" y="5" width="1" height="1" fill="#000"/><rect x="3" y="5" width="1" height="1" fill="#fff"/><rect x="4" y="5" width="1" height="1" fill="#000"/><rect x="3" y="6" width="1" height="1" fill="#000"/></svg>
<svg style="left:511px;top:210px" width="10" height="3" viewBox="0 0 10 3" shape-rendering="crispEdges"><rect x="0" y="0" width="5" height="1" fill="#005858"/><rect x="0" y="1" width="10" height="1" fill="#005858"/><rect x="0" y="2" width="5" height="1" fill="#005858"/></svg>
<svg style="left:515px;top:214px" width="7" height="7" viewBox="0 0 7 7" shape-rendering="crispEdges"><rect x="2" y="0" width="3" height="1" fill="#ff0000"/><rect x="1" y="1" width="5" height="1" fill="#ff0000"/><rect x="0" y="2" width="7" height="1" fill="#ff0000"/><rect x="0" y="3" width="1" height="1" fill="#ff0000"/><rect x="1" y="3" width="5" height="1" fill="#fff"/><rect x="6" y="3" width="1" height="1" fill="#ff0000"/><rect x="0" y="4" width="7" height="1" fill="#ff0000"/><rect x="1" y="5" width="5" height="1" fill="#ff0000"/><rect x="2" y="6" width="3" height="1" fill="#ff0000"/></svg>
<svg style="left:1507px;top:210px" width="9" height="3" viewBox="0 0 9 3" shape-rendering="crispEdges"><rect x="5" y="0" width="4" height="1" fill="#005858"/><rect x="0" y="1" width="9" height="1" fill="#005858"/><rect x="5" y="2" width="4" height="1" fill="#005858"/></svg>
<svg style="left:1510px;top:214px" width="7" height="7" viewBox="0 0 7 7" shape-rendering="crispEdges"><rect x="3" y="0" width="1" height="1" fill="#000"/><rect x="2" y="1" width="1" height="1" fill="#000"/><rect x="3" y="1" width="1" height="1" fill="#fff"/><rect x="4" y="1" width="1" height="1" fill="#000"/><rect x="1" y="2" width="2" height="1" fill="#000"/><rect x="3" y="2" width="1" height="1" fill="#fff"/><rect x="4" y="2" width="2" height="1" fill="#000"/><rect x="0" y="3" width="1" height="1" fill="#000"/><rect x="1" y="3" width="5" height="1" fill="#fff"/><rect x="6" y="3" width="1" height="1" fill="#000"/><rect x="1" y="4" width="2" height="1" fill="#000"/><rect x="3" y="4" width="1" height="1" fill="#fff"/><rect x="4" y="4" width="2" height="1" fill="#000"/><rect x="2" y="5" width="1" height="1" fill="#000"/><rect x="3" y="5" width="1" height="1" fill="#fff"/><rect x="4" y="5" width="1" height="1" fill="#000"/><rect x="3" y="6" width="1" height="1" fill="#000"/></svg>
<svg style="left:1526px;top:210px" width="10" height="3" viewBox="0 0 10 3" shape-rendering="crispEdges"><rect x="5" y="0" width="5" height="1" fill="#005858"/><rect x="0" y="1" width="10" height="1" fill="#005858"/><rect x="5" y="2" width="5" height="1" fill="#005858"/></svg>
<svg style="left:1529px;top:214px" width="7" height="7" viewBox="0 0 7 7" shape-rendering="crispEdges"><rect x="2" y="0" width="3" height="1" fill="#ff0000"/><rect x="1" y="1" width="5" height="1" fill="#ff0000"/><rect x="0" y="2" width="7" height="1" fill="#ff0000"/><rect x="0" y="3" width="1" height="1" fill="#ff0000"/><rect x="1" y="3" width="5" height="1" fill="#fff"/><rect x="6" y="3" width="1" height="1" fill="#ff0000"/><rect x="0" y="4" width="7" height="1" fill="#ff0000"/><rect x="1" y="5" width="5" height="1" fill="#ff0000"/><rect x="2" y="6" width="3" height="1" fill="#ff0000"/></svg>
<div style="left:925px;top:283px;width:141px;height:89px;background:#e9edf0;box-sizing:border-box;border:1px solid #000;"></div>
<div style="left:926px;top:284px;width:139px;height:26px;background:#637b8d;"></div>
<div style="left:925px;top:310px;width:141px;height:1px;background:#000"></div>
<div style="left:925px;top:290.0px;line-height:16px;font-size:11.5px;white-space:nowrap;width:141px;text-align:center;color:#f4f4f4;">Reuse or Start Connection</div>
<div style="left:915px;top:321px;width:5px;height:5px;box-sizing:border-box;border:1px solid #000;background:#fff;"></div>
<div style="left:920px;top:323px;width:5px;height:1px;background:#000"></div>
<div style="left:928.5px;top:315.6px;line-height:16px;font-size:11.5px;white-space:nowrap;">name</div>
<div style="left:915px;top:337px;width:5px;height:5px;box-sizing:border-box;border:1px solid #000;background:#fff;"></div>
<div style="left:920px;top:339px;width:5px;height:1px;background:#000"></div>
<div style="left:928.5px;top:331.6px;line-height:16px;font-size:11.5px;white-space:nowrap;">startURL</div>
<div style="left:915px;top:353px;width:5px;height:5px;box-sizing:border-box;border:1px solid #000;background:#fff;"></div>
<div style="left:920px;top:355px;width:5px;height:1px;background:#000"></div>
<div style="left:928.5px;top:347.6px;line-height:16px;font-size:11.5px;white-space:nowrap;">browserType</div>
<div style="left:925px;top:315.6px;line-height:16px;font-size:11.5px;white-space:nowrap;width:138px;text-align:right;">connection</div>
<div style="left:1066px;top:323px;width:5px;height:1px;background:#000"></div>
<div style="left:1071px;top:321px;width:5px;height:5px;box-sizing:border-box;border:1px solid #000;background:#fff;"></div>
<div style="left:1070px;top:283px;width:2px;height:8px;background:#ff0000;"></div>
<div style="left:1070px;top:293px;width:2px;height:2px;background:#ff0000;"></div>
<div style="left:925px;top:443px;width:64px;height:96px;background:#e9edf0;box-sizing:border-box;border:3px solid #ff0000;"></div>
<div style="left:928px;top:446px;width:58px;height:24px;background:#637b8d;"></div>
<div style="left:928px;top:470px;width:58px;height:1px;background:#000"></div>
<div style="left:925px;top:450.0px;line-height:16px;font-size:11.5px;white-space:nowrap;width:64px;text-align:center;letter-spacing:-0.6px;color:#f4f4f4;">Send Keys</div>
<div style="left:949px;top:433px;width:1px;height:11px;background:#000"></div>
<div style="left:947px;top:441px;width:5px;height:1px;background:#000"></div>
<div style="left:948px;top:442px;width:3px;height:1px;background:#000"></div>
<div style="left:915px;top:481px;width:5px;height:5px;background:#a8a8a8;"></div>
<div style="left:920px;top:483px;width:5px;height:1px;background:#a8a8a8"></div>
<div style="left:928.5px;top:475.6px;line-height:16px;font-size:11.5px;white-space:nowrap;">locator</div>
<div style="left:915px;top:497px;width:5px;height:5px;background:#a8a8a8;"></div>
<div style="left:920px;top:499px;width:5px;height:1px;background:#a8a8a8"></div>
<div style="left:928.5px;top:491.6px;line-height:16px;font-size:11.5px;white-space:nowrap;">keys</div>
<div style="left:915px;top:513px;width:5px;height:5px;background:#000;"></div>
<div style="left:920px;top:515px;width:5px;height:1px;background:#000"></div>
<div style="left:928.5px;top:507.6px;line-height:16px;font-size:11.5px;white-space:nowrap;">timeout</div>
<div style="left:487px;top:476px;width:428px;height:15px;background:#fff;box-sizing:border-box;border:1px solid #000;"></div>
<div style="left:487.083px;top:476.2px;line-height:16px;font-size:11.5px;white-space:nowrap;width:428px;text-align:center;letter-spacing:0.166px;color:#ff00ff;">//body/div[@class="pageContentDiv"]/div...hSmallX"]/table/tbody/tr/td[1]/div/input</div>
<div style="left:832px;top:492px;width:83px;height:15px;background:#fff;box-sizing:border-box;border:1px solid #000;"></div>
<div style="left:831.915px;top:492.2px;line-height:16px;font-size:11.5px;white-space:nowrap;width:83px;text-align:center;letter-spacing:-0.17px;color:#ff00ff;">mmustermann</div>
<div style="left:993px;top:443px;width:2px;height:8px;background:#ff0000;"></div>
<div style="left:993px;top:453px;width:2px;height:2px;background:#ff0000;"></div>
<div style="left:949px;top:539px;width:1px;height:10px;background:#000"></div>
<div style="left:947px;top:546px;width:5px;height:1px;background:#000"></div>
<div style="left:948px;top:547px;width:3px;height:1px;background:#000"></div>
<div style="left:949px;top:551px;width:1px;height:19px;background:repeating-linear-gradient(#000 0 1px,#fff 1px 2px)"></div>
<div style="left:949px;top:571px;width:1px;height:12px;background:#000"></div>
<div style="left:947px;top:580px;width:5px;height:1px;background:#000"></div>
<div style="left:948px;top:581px;width:3px;height:1px;background:#000"></div>
<div style="left:925px;top:582px;width:64px;height:96px;background:#e9edf0;box-sizing:border-box;border:1px solid #000;"></div>
<div style="left:926px;top:583px;width:62px;height:26px;background:#637b8d;"></div>
<div style="left:925px;top:609px;width:64px;height:1px;background:#000"></div>
<div style="left:925px;top:589.0px;line-height:16px;font-size:11.5px;white-space:nowrap;width:64px;text-align:center;letter-spacing:-0.6px;color:#f4f4f4;">Send Keys</div>
<div style="left:915px;top:617px;width:5px;height:5px;background:#a8a8a8;"></div>
<div style="left:920px;top:619px;width:5px;height:1px;background:#a8a8a8"></div>
<div style="left:928.5px;top:611.6px;line-height:16px;font-size:11.5px;white-space:nowrap;">locator</div>
<div style="left:915px;top:633px;width:5px;height:5px;background:#a8a8a8;"></div>
<div style="left:920px;top:635px;width:5px;height:1px;background:#a8a8a8"></div>
<div style="left:928.5px;top:627.6px;line-height:16px;font-size:11.5px;white-space:nowrap;">keys</div>
<div style="left:915px;top:649px;width:5px;height:5px;background:#000;"></div>
<div style="left:920px;top:651px;width:5px;height:1px;background:#000"></div>
<div style="left:928.5px;top:643.6px;line-height:16px;font-size:11.5px;white-space:nowrap;">timeout</div>
<div style="left:487px;top:612px;width:428px;height:15px;background:#fff;box-sizing:border-box;border:1px solid #000;"></div>
<div style="left:487.083px;top:612.2px;line-height:16px;font-size:11.5px;white-space:nowrap;width:428px;text-align:center;letter-spacing:0.166px;color:#ff00ff;">//body/div[@class="pageContentDiv"]/div...hSmallX"]/table/tbody/tr/td[1]/div/input</div>
<div style="left:887px;top:628px;width:28px;height:15px;background:#fff;box-sizing:border-box;border:1px solid #000;"></div>
<div style="left:886.6px;top:628.2px;line-height:16px;font-size:11.5px;white-space:nowrap;width:28px;text-align:center;letter-spacing:-0.8px;color:#ff00ff;">mm</div>
<div style="left:949px;top:678px;width:1px;height:10px;background:#000"></div>
<div style="left:947px;top:685px;width:5px;height:1px;background:#000"></div>
<div style="left:948px;top:686px;width:3px;height:1px;background:#000"></div>
<div style="left:949px;top:690px;width:1px;height:19px;background:repeating-linear-gradient(#000 0 1px,#fff 1px 2px)"></div>
<div style="left:949px;top:710px;width:1px;height:12px;background:#000"></div>
<div style="left:947px;top:719px;width:5px;height:1px;background:#000"></div>
<div style="left:948px;top:720px;width:3px;height:1px;background:#000"></div>
<div style="left:925px;top:721px;width:64px;height:80px;background:#e9edf0;box-sizing:border-box;border:1px solid #000;"></div>
<div style="left:926px;top:722px;width:62px;height:26px;background:#637b8d;"></div>
<div style="left:925px;top:748px;width:64px;height:1px;background:#000"></div>
<div style="left:925px;top:728.0px;line-height:16px;font-size:11.5px;white-space:nowrap;width:64px;text-align:center;letter-spacing:-0.3px;color:#f4f4f4;">Click</div>
<div style="left:915px;top:761px;width:5px;height:5px;background:#a8a8a8;"></div>
<div style="left:920px;top:763px;width:5px;height:1px;background:#a8a8a8"></div>
<div style="left:928.5px;top:755.6px;line-height:16px;font-size:11.5px;white-space:nowrap;">locator</div>
<div style="left:915px;top:777px;width:5px;height:5px;background:#000;"></div>
<div style="left:920px;top:779px;width:5px;height:1px;background:#000"></div>
<div style="left:928.5px;top:771.6px;line-height:16px;font-size:11.5px;white-space:nowrap;">timeout</div>
<div style="left:487px;top:756px;width:428px;height:15px;background:#fff;box-sizing:border-box;border:1px solid #000;"></div>
<div style="left:487.083px;top:756.2px;line-height:16px;font-size:11.5px;white-space:nowrap;width:428px;text-align:center;letter-spacing:0.166px;color:#ff00ff;">//body/div[@class="pageContentDiv"]/div...able/tbody/tr[5]/td[@class="left"]/input</div>
<div style="left:894px;top:898px;width:125px;height:22px;background:#f0f0f0;box-sizing:border-box;border:1px solid #000;"></div>
<div style="left:894px;top:900.5px;line-height:16px;font-size:11.5px;white-space:nowrap;width:125px;text-align:center;">Accept</div>
<div style="left:1024px;top:898px;width:125px;height:22px;background:#f0f0f0;box-sizing:border-box;border:1px solid #000;"></div>
<div style="left:1024px;top:900.5px;line-height:16px;font-size:11.5px;white-space:nowrap;width:125px;text-align:center;">Discard</div>
<svg style="left:994px;top:153px" width="70" height="71" viewBox="0 0 70 71" ><ellipse cx="35" cy="35.5" rx="28.1" ry="28.2" fill="none" stroke="#ed1c24" stroke-width="4.6" shape-rendering="crispEdges"/></svg>
<div style="left:8px;top:929px;width:1559px;height:1px;background:#a0a0a0"></div>
<div style="left:8px;top:929px;width:1px;height:24px;background:#a0a0a0"></div>
<div style="left:8px;top:952px;width:1559px;height:1px;background:#fdfdfd"></div>
<div style="left:8px;top:954px;width:1559px;height:1px;background:#dcdcdc"></div>
<div style="left:761px;top:931px;width:1px;height:21px;background:#fdfdfd"></div>
<div style="left:762px;top:930px;width:8px;height:22px;background:#f3f3f3;"></div>
<div style="left:770px;top:930px;width:1px;height:22px;background:#a0a0a0"></div>
<div style="left:775px;top:933.5px;line-height:16px;font-size:12px;white-space:nowrap;">Login <b>[modified]</b></div>
<div style="left:1499px;top:930px;width:1px;height:22px;background:#a0a0a0"></div>
<div style="left:1523px;top:930px;width:1px;height:22px;background:#fdfdfd"></div>
<div style="left:1525px;top:930px;width:1px;height:22px;background:#a0a0a0"></div>
<div style="left:1550px;top:930px;width:1px;height:22px;background:#fdfdfd"></div>
<svg style="left:1504px;top:934px" width="15" height="15" viewBox="0 0 15 15" ><defs><linearGradient id="led" x1="0" y1="0" x2="0" y2="1"><stop offset="0" stop-color="#fdfdfd"/><stop offset="0.5" stop-color="#e6e6e6"/><stop offset="0.55" stop-color="#bdbdbd"/><stop offset="1" stop-color="#d9d9d9"/></linearGradient></defs>
<circle cx="7.5" cy="7.5" r="6.4" fill="url(#led)" stroke="#b4b4b4" stroke-width="1"/></svg>
</body></html>
